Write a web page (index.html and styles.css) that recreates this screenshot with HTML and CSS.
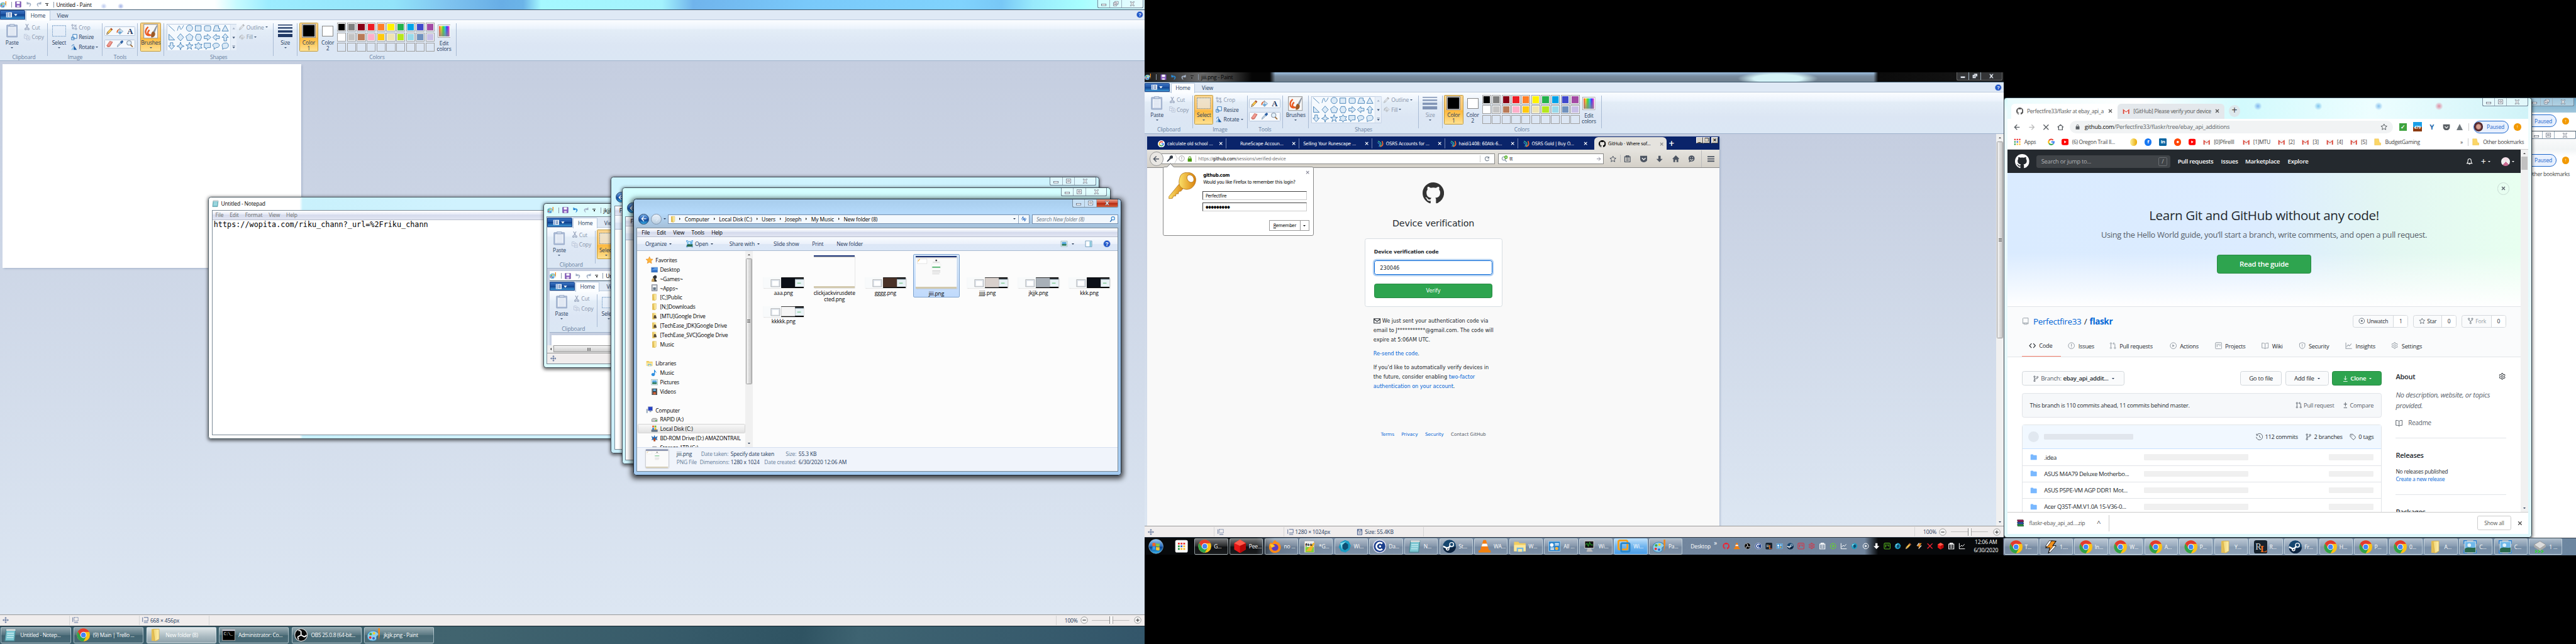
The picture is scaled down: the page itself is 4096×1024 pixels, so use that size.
FILE: index.html
```html
<!DOCTYPE html>
<html lang="en">
<head>
<meta charset="utf-8">
<title>Desktop</title>
<link rel="stylesheet" href="styles.css">
</head>
<body>
<svg class="defs-text">
<symbol id="letterA" viewBox="0 0 16 16"><text x="8" y="14" text-anchor="middle" font-family="Liberation Serif,serif" font-weight="bold" font-size="18" fill="#1d3660">A</text></symbol>
<symbol id="help" viewBox="0 0 16 16"><circle cx="8" cy="8" r="7.500" fill="#2156c8" stroke="#9cb4e4"/><text x="8" y="12.500" font-size="12" font-weight="bold" text-anchor="middle" fill="#fff" font-family="Liberation Sans,sans-serif">?</text></symbol>
<symbol id="cmd" viewBox="0 0 30 30"><path d="M1 3h28v24H1z" fill="#000" stroke="#aaa" stroke-width="1.500"/><path d="M1 3h28v3H1z" fill="#ccd"/><text x="4" y="16" font-size="9" fill="#fff" font-family="Liberation Mono,monospace">C:\_</text></symbol>
<symbol id="npp" viewBox="0 0 30 30"><path d="M3 3h22v26H3z" fill="#f8f8f8" stroke="#999"/><path d="M6 8h16M6 12h16" stroke="#aaa"/><path d="M5 16h19v12H5z" fill="#7fce3a"/><path d="M12 19l-6 7 12 0 8-18-3-1z" fill="#f2b22a"/><text x="5" y="16" font-size="11" font-weight="bold" font-family="Liberation Sans,sans-serif">f++</text></symbol>
<symbol id="rl" viewBox="0 0 30 30"><rect width="30" height="30" rx="5" fill="#16222c"/><text x="3" y="21" font-size="20" fill="#ddd" font-family="Liberation Serif,serif">R</text><text x="14" y="27" font-size="22" font-weight="bold" fill="#f4701c" font-family="Liberation Serif,serif">L</text></symbol>
</svg>
<svg class="defs" width="0" height="0">
<defs>
<linearGradient id="gOrb" x1="0" y1="0" x2="0" y2="1"><stop offset="0" stop-color="#9cc8ee"/><stop offset=".5" stop-color="#2a6fc0"/><stop offset=".55" stop-color="#0b3f8c"/><stop offset="1" stop-color="#35b4ee"/></linearGradient>
<linearGradient id="gRain" x1="0" x2="1"><stop offset="0" stop-color="#f33"/><stop offset=".2" stop-color="#fd2"/><stop offset=".4" stop-color="#3d3"/><stop offset=".6" stop-color="#2cf"/><stop offset=".75" stop-color="#33f"/><stop offset="1" stop-color="#f3c"/></linearGradient>
<linearGradient id="gGray" x1="0" y1="0" x2="0" y2="1"><stop offset="0" stop-color="#888" stop-opacity="0"/><stop offset="1" stop-color="#888" stop-opacity=".8"/></linearGradient>
<linearGradient id="gFold" x1="0" x2="1"><stop offset="0" stop-color="#f0d26c"/><stop offset="1" stop-color="#fdf0b0"/></linearGradient>
<linearGradient id="gKey" x1="0" x2="1"><stop offset="0" stop-color="#fbe06a"/><stop offset="1" stop-color="#d9820c"/></linearGradient>
</defs>
<symbol id="palette" viewBox="0 0 16 16"><path d="M7 3C3 3 0 6 0 9.500s3 5.500 6.500 5.500 5-2 4.500-4 2-2 2.500-3.500S11 3 7 3z" fill="#8fd0ee" stroke="#3c86b4" stroke-width=".8"/><circle cx="4" cy="7" r="1.500" fill="#4a4"/><circle cx="8" cy="6" r="1.500" fill="#fc2"/><circle cx="3.500" cy="11" r="1.500" fill="#e33"/><circle cx="7.500" cy="12" r="1.500" fill="#36c"/><path d="M13 0h2v5l-1 9-1-9z" fill="#f08a1c"/></symbol>
<symbol id="save" viewBox="0 0 14 14"><path d="M1 1h12v12H1z" fill="#8a5fc0" stroke="#5c3a92"/><path d="M3.500 1h7v5h-7z" fill="#fff"/><path d="M4 9h6v4H4z" fill="#e4dcf0"/></symbol>
<symbol id="undo" viewBox="0 0 14 14"><path d="M2 1v6h6L6 5c4 0 4 4 1 8 6-3 7-10-1-10z" fill="currentColor"/></symbol>
<symbol id="redo" viewBox="0 0 14 14"><path d="M12 1v6H6l2-2c-4 0-4 4-1 8C1 10 0 3 8 3z" fill="currentColor"/></symbol>
<symbol id="paste" viewBox="0 0 26 30"><rect x="1" y="2" width="24" height="27" rx="1" fill="#a9b9d4" stroke="#8c9fc0"/><path d="M4 6h18v20H4z" fill="#f2f6fc"/><path d="M8 0h10v5H8z" fill="#c9d4e6" stroke="#8c9fc0"/><path d="M6 9h14M6 12h14M6 15h14M6 18h14M6 21h14M6 24h14" stroke="#c3cfe2"/></symbol>
<symbol id="cut" viewBox="0 0 14 14"><g fill="none" stroke="#97a4bc" stroke-width="1.600"><path d="M4 0l5 9M10 0L5 9"/><circle cx="4" cy="11.500" r="1.800"/><circle cx="10" cy="11.500" r="1.800"/></g></symbol>
<symbol id="copy" viewBox="0 0 16 16"><g fill="#eef3fa" stroke="#9dadc8"><path d="M1 1h6l2 2v8H1z"/><path d="M7 5h6l2 2v8H7z"/><path d="M9 8h4M9 10h4M9 12h4M3 4h3M3 6h3"/></g></symbol>
<symbol id="select" viewBox="0 0 31 26"><rect x=".5" y="1" width="30" height="24" fill="#e6eefa" fill-opacity=".6" stroke="#1c5a9c" stroke-dasharray="2 1.500"/></symbol>
<symbol id="crop" viewBox="0 0 14 14"><path d="M3 0v11h11M0 3h11v11M3 11l9-9" fill="none" stroke="#97a4bc" stroke-width="1.400"/></symbol>
<symbol id="resize" viewBox="0 0 14 14"><path d="M4 1h9v9H4zM1 7h6v6H1z" fill="#eef6fd" stroke="#2b74b8" stroke-width="1.300"/></symbol>
<symbol id="rotate" viewBox="0 0 14 14"><path d="M6 3l7 10H6z" fill="#1a5ea8"/><path d="M5 6v7H0z" fill="#88c0ea"/><path d="M2 5c0-3 3-4 5-3" fill="none" stroke="#2b74b8" stroke-width="1.400"/></symbol>
<symbol id="pencil" viewBox="0 0 16 16"><path d="M1 15l1.500-5L11 1l3 3-8.500 9z" fill="#ffc94d" stroke="#8c6a28"/><path d="M1 15l1.500-5 3 3z" fill="#f4d9b0" stroke="#333" stroke-width=".6"/><path d="M11 1l3 3-2 2-3-3z" fill="#b04a36"/></symbol>
<symbol id="bucket" viewBox="0 0 16 16"><path d="M7 2l8 6-7 7-6-6z" fill="#d8ebf8" stroke="#5c88ae"/><path d="M8 1v8" stroke="#888"/><path d="M7 3C2 4 0 7 1 12c2 0 2-5 5-7z" fill="#e4632a"/><path d="M4 9h9l-5 5z" fill="#5c9fd4"/></symbol>
<symbol id="eraser" viewBox="0 0 16 16"><path d="M1 12L8 2l6 2-6 10-5 1z" fill="#f09a90" stroke="#c35e52"/><path d="M1 12l6 2 7-10" fill="none" stroke="#c35e52"/></symbol>
<symbol id="picker" viewBox="0 0 16 16"><path d="M2 15l1-4 6-6 2 2-6 6z" fill="#c8dcec" stroke="#6b86a0"/><path d="M8 4l5-4 3 3-4 5z" fill="#2d62a6"/></symbol>
<symbol id="mag" viewBox="0 0 16 16"><circle cx="6" cy="6" r="5" fill="#e3f1fb" stroke="#8896a8" stroke-width="1.500"/><path d="M9 10l5 5" stroke="#9a6a38" stroke-width="2.500"/></symbol>
<symbol id="find" viewBox="0 0 16 16"><circle cx="10" cy="5.500" r="4.500" fill="none" stroke="#3a8ad0" stroke-width="2"/><path d="M7 9l-5 6" stroke="#2c6cb0" stroke-width="2.500"/></symbol>
<symbol id="addfind" viewBox="0 0 16 16"><circle cx="6" cy="7" r="4" fill="none" stroke="#8896a8" stroke-width="1.600"/><path d="M9 10l4 5" stroke="#8896a8" stroke-width="2"/><circle cx="11.500" cy="4" r="4" fill="#4caf1c"/><path d="M9.500 4h4M11.500 2v4" stroke="#fff" stroke-width="1.300"/></symbol>
<symbol id="brush" viewBox="0 0 34 34"><rect x="1" y="1" width="32" height="32" fill="#f7f7f7" stroke="#8f8f8f" stroke-width="1.500"/><path d="M11 7c-9 8-8 22 7 19-9-1-10-6-4-12" fill="none" stroke="#ea5a22" stroke-width="3.500"/><path d="M31 2L22 18l4 3 6-16z" fill="#8a93a0"/><path d="M22 17l5 4c1 8-5 11-9 10-1-6 0-11 4-14z" fill="#9c5a26"/></symbol>
<symbol id="shapes" viewBox="0 0 157 60"><rect x=".5" y=".5" width="156" height="59" fill="#f5f9fd" stroke="#a8bbd4"/><path d="M143 1v58h13V1z" fill="#e6eef8"/><path d="M142.500 0v60" stroke="#c8d6e8"/><g fill="#dbeaf7" stroke="#2c70ac" stroke-width="1.100"><path d="M4 3l14 13"/><path d="M24 15c3-14 5-12 6-6s4 3 8-6" fill="none"/><circle cx="51" cy="9.500" r="7"/><path d="M64 4h13v12H64z"/><rect x="84.500" y="4" width="14" height="12" rx="3"/><path d="M108 4h8v6h3v6h-15z"/><path d="M131 3l7 13h-14z"/><path d="M5 23v13h13z"/><path d="M31 22l7 8-7 8-7-8z"/><path d="M51 22l8 6-3 9H46l-3-9z"/><path d="M67 23h8l3 7-3 7h-8l-3-7z"/><path d="M84 27h7v-4l8 7-8 7v-4h-7z"/><path d="M118 27h-7v-4l-8 7 8 7v-4h7z"/><path d="M128 38v-8h-4l7-8 7 8h-4v8z"/><path d="M8 42v7H4l7 8 7-8h-4v-7z"/><path d="M31 41l2 6 6 3-6 2-2 6-2-6-6-2 6-3z"/><path d="M51 41l2 6h6l-5 4 2 6-5-4-5 4 2-6-5-4h6z"/><path d="M71 41l2.500 4.500H79L76.500 50l2.500 4h-5.500L71 58l-2.500-4H63l2.500-4-2.500-4.500h5.500z"/><path d="M84 43h14v10h-7l-3 4-1-4h-3z"/><path d="M111 43c9 0 9 10 0 10l-5 4v-5c-5-3-3-9 5-9z"/><path d="M131 43c4-2 8 2 7 7s-8 5-10 5l-3 2v-5c-3-5 1-10 6-9z"/></g><path d="M147 12h6l-3-4z" fill="#a5b2c6"/><path d="M147 29h6l-3 4zM147 51h6l-3 4zM147 48h6v1h-6z" fill="#3f5574"/></symbol>
<symbol id="bars" viewBox="0 0 33 29"><path d="M0 0h33v2H0zM0 6h33v3H0zM0 13h33v5H0zM0 21h33v7H0z" fill="currentColor"/></symbol>
<symbol id="rainbow" viewBox="0 0 30 30"><rect x=".5" y=".5" width="29" height="29" fill="#fff" stroke="#888"/><rect x="3" y="3" width="24" height="24" fill="url(#gRain)"/><rect x="3" y="3" width="24" height="24" fill="url(#gGray)"/></symbol>
<symbol id="filebtn" viewBox="0 0 30 14"><path d="M0 1h14v12H0z" fill="#fff"/><path d="M1.500 2h3v10h-3z" fill="#7ea2d8"/><path d="M6 4h6M6 7h6M6 10h6" stroke="#234f96" stroke-width="1.400"/><path d="M19 5h8l-4 5z" fill="#fff"/></symbol>
<symbol id="wmin" viewBox="0 0 14 14"><rect x="1.500" y="7.500" width="11" height="4" fill="#fff" stroke="#4c5668"/></symbol>
<symbol id="wmax" viewBox="0 0 14 14"><rect x="1.500" y="2" width="11" height="9.500" fill="#fff" stroke="#4c5668"/><rect x="5" y="5" width="4" height="3" fill="none" stroke="#4c5668"/></symbol>
<symbol id="wres" viewBox="0 0 14 14"><path d="M5 1h8v7H5z" fill="#fff" stroke="#4c5668"/><path d="M1.500 4h8v8h-8z" fill="#fff" stroke="#4c5668"/><path d="M4 7h3v2H4z" fill="none" stroke="#4c5668"/></symbol>
<symbol id="wx" viewBox="0 0 14 14"><path d="M2 2h3l2 3 2-3h3L8.800 7l3.200 5H9L7 9l-2 3H2l3.200-5z" fill="#fff" stroke="#4c5668" stroke-width=".9"/></symbol>
<symbol id="cross" viewBox="0 0 10 10"><path d="M1.500 1.500l7 7M8.500 1.500l-7 7" stroke="currentColor" stroke-width="1.800"/></symbol>
<symbol id="move" viewBox="0 0 14 14"><path d="M7 1v12M1 7h12M5 3l2-2 2 2M5 11l2 2 2-2M3 5L1 7l2 2M11 5l2 2-2 2" fill="none" stroke="#24427a"/></symbol>
<symbol id="selsize" viewBox="0 0 14 14"><path d="M4 1h9v8H4z" fill="none" stroke="#24427a" stroke-dasharray="1.500 1"/><path d="M1 1v10M4 12.500h9" stroke="#24427a"/></symbol>
<symbol id="imgsize" viewBox="0 0 14 14"><path d="M4 1h9v8H4" fill="none" stroke="#24427a"/><path d="M1 1v10M4 12.500h9" stroke="#24427a"/></symbol>
<symbol id="disk" viewBox="0 0 14 14"><path d="M2 1h10v12H2zM4 1v4h6V1M4 9h6" fill="none" stroke="#24427a" stroke-width="1.200"/></symbol>
<symbol id="minus" viewBox="0 0 16 16"><circle cx="8" cy="8" r="7" fill="#f4f4f4" stroke="#888"/><path d="M4.500 8h7" stroke="#444" stroke-width="1.600"/></symbol>
<symbol id="plus" viewBox="0 0 16 16"><circle cx="8" cy="8" r="7" fill="#f4f4f4" stroke="#888"/><path d="M4.500 8h7M8 4.500v7" stroke="#444" stroke-width="1.600"/></symbol>
<symbol id="notepad" viewBox="0 0 16 16"><path d="M3 1.500h11l-1.500 13.500H1.500z" fill="#7cc7d2" stroke="#4d8a96"/><path d="M3 1h11v2H3z" fill="#d9d9d9"/><path d="M4 6h8M4 8.500h8M3.500 11h8" stroke="#c8ecf0"/></symbol>
<symbol id="chrome" viewBox="0 0 30 30"><circle cx="15" cy="15" r="14.500" fill="#fbc116"/><path d="M15 15L2.500 7.800A14.500 14.500 0 0 1 27.600 7.800L15 8z" fill="#e33b2e"/><path d="M15 8h12.600A14.500 14.500 0 0 0 2.500 7.800L9 18z" fill="#e33b2e"/><path d="M2.500 7.800A14.500 14.500 0 0 0 15 29.500l6-10.500-12-1z" fill="#2fa24c"/><circle cx="15" cy="15" r="6.800" fill="#fff"/><circle cx="15" cy="15" r="5.400" fill="#4285f4"/></symbol>
<symbol id="folder" viewBox="0 0 16 16"><path d="M3 1h7v14H3z" fill="#e3be55"/><path d="M5 1l7 0v12l-5 2.500z" fill="url(#gFold)" stroke="#d2ac46" stroke-width=".6"/></symbol>
<symbol id="bfold" viewBox="0 0 16 16"><path d="M1 1h9l2 9h3v5H1z" fill="#fbd667" stroke="#e6b840" stroke-width=".6"/></symbol>
<symbol id="obs" viewBox="0 0 30 30"><circle cx="15" cy="15" r="14" fill="#0a0a0a" stroke="#ddd" stroke-width="1.500"/><path d="M15 15V7a6 6 0 0 0-6-2M15 15l7 4a6 6 0 0 0 5-4M15 15l-7 4a6 6 0 0 0 2 6" stroke="#fff" stroke-width="2.500" fill="none"/></symbol>
<symbol id="orb" viewBox="0 0 34 34"><circle cx="17" cy="17" r="16" fill="url(#gOrb)" stroke="#8fb2cc"/><path d="M9 10c3-2 5-1 7 0v7c-2-1-5-1-7 0z" fill="#f0632a"/><path d="M17 10c3 1 5 2 8 0v7c-3 2-5 1-8 0z" fill="#8cc63e"/><path d="M9 18c3-2 5-1 7 0v7c-2-1-5-1-7 0z" fill="#3a9ae8"/><path d="M17 18c3 1 5 2 8 0v7c-3 2-5 1-8 0z" fill="#fdc82a"/></symbol>
<symbol id="appsq" viewBox="0 0 30 30"><rect x="1" y="1" width="28" height="28" rx="4" fill="#fafafa"/><path d="M7 7h4v4H7zM13 7h4v4h-4zM19 7h4v4h-4z" fill="#e33"/><path d="M7 13h4v4H7z" fill="#2a9c4a"/><path d="M13 13h4v4h-4z" fill="#36c"/><path d="M19 13h4v4h-4z" fill="#fb2"/><path d="M7 19h4v4H7z" fill="#2a9c4a"/><path d="M13 19h4v4h-4zM19 19h4v4h-4z" fill="#fb2"/></symbol>
<symbol id="apps9" viewBox="0 0 15 15"><path d="M1 1h3v3H1zM6 1h3v3H6zM11 1h3v3h-3z" fill="#e33"/><path d="M1 6h3v3H1zM1 11h3v3H1z" fill="#2a9c4a"/><path d="M6 6h3v3H6z" fill="#36c"/><path d="M11 6h3v3h-3zM6 11h3v3H6zM11 11h3v3h-3z" fill="#fb2"/></symbol>
<symbol id="ruby" viewBox="0 0 30 30"><path d="M15 0l13 8v14l-13 8-13-8V8z" fill="#e51616"/><path d="M15 0l13 8-13 6L2 8z" fill="#ff5a4a"/><path d="M15 14v16l13-8V8z" fill="#b40808"/></symbol>
<symbol id="firefox" viewBox="0 0 30 30"><path d="M15 1c2 4 4 4 8 6 6 6 6 14 1 19s-14 5-19 0S0 12 5 6c1 2 3 2 4 2 1-3 3-6 6-7z" fill="#ff8a16"/><circle cx="14.500" cy="17.500" r="7.500" fill="#5b3cc4"/><path d="M3 11c4-2 9 0 12 4-4 0-5 3-8 3z" fill="#ffc928"/></symbol>
<symbol id="swirl" viewBox="0 0 30 30"><path d="M15 1l8 3 5 9-3 10-9 6-10-3-5-9 4-11z" fill="#1b9bc2"/><path d="M15 6l7 5v8l-7 5-7-5v-8z" fill="#0d4f74"/><path d="M4 8l14-4-9 8v12z" fill="#7fdcee"/></symbol>
<symbol id="dcc" viewBox="0 0 30 30"><circle cx="15" cy="15" r="14" fill="#1c3f8c" stroke="#dde" stroke-width="2"/><path d="M21 9a8 8 0 1 0 0 12" fill="none" stroke="#fff" stroke-width="4"/><circle cx="16" cy="15" r="2.500" fill="#fff"/></symbol>
<symbol id="steam" viewBox="0 0 30 30"><circle cx="15" cy="15" r="14.500" fill="#15456e"/><path d="M1 19a14.500 14.500 0 0 0 28 0c1-8-4 0-14 0z" fill="#0d2440"/><circle cx="20" cy="11" r="4.500" fill="none" stroke="#fff" stroke-width="2"/><path d="M1 15l10 5M17 14l-5 5" stroke="#fff" stroke-width="3.500"/><circle cx="11" cy="20.500" r="3" fill="none" stroke="#fff" stroke-width="2"/></symbol>
<symbol id="vlc" viewBox="0 0 30 30"><path d="M12 1h6l7 24H5z" fill="#f57c10"/><path d="M10 9h10l2 6H8z" fill="#fff"/><path d="M2 24h26l1 5H1z" fill="#f0820e"/></symbol>
<symbol id="explorer" viewBox="0 0 30 30"><path d="M2 5h10l2 3h14v18H2z" fill="#f0cc60"/><path d="M2 12h26v14H2z" fill="#fbe79c"/><path d="M8 18h15v9H8z" fill="#74b8e0"/><path d="M11 21h9v6h-9z" fill="#fbe79c"/></symbol>
<symbol id="panel" viewBox="0 0 30 30"><rect x="2" y="4" width="26" height="22" fill="#2f86cc" stroke="#bfe0f4"/><circle cx="9" cy="12" r="4" fill="#fff"/><path d="M16 9h9M16 12h9M6 19h8M6 22h8" stroke="#fff" stroke-width="2"/><circle cx="20" cy="20" r="3.500" fill="#ffb23a"/></symbol>
<symbol id="sysmon" viewBox="0 0 30 30"><path d="M4 3h20v16H4z" fill="#111" stroke="#ccc" stroke-width="1.500"/><path d="M6 12l3-4 3 7 3-9 3 6h4" stroke="#3f3" fill="none"/><path d="M10 20h8l4 7H8z" fill="#bbb"/></symbol>
<symbol id="vmw" viewBox="0 0 30 30"><rect x="2" y="2" width="20" height="20" rx="3" fill="none" stroke="#f6a01c" stroke-width="4"/><rect x="8" y="8" width="19" height="19" rx="3" fill="none" stroke="#2b86c8" stroke-width="4"/></symbol>
<symbol id="winamp" viewBox="0 0 30 30"><path d="M17 1l10 1-7 10h6L10 29l3-12H4z" fill="#f2901c" stroke="#111" stroke-width="1.500"/><path d="M12 1l5 1L8 14H3zM22 12l5 1-14 15-2-3z" fill="#fff" stroke="#111"/></symbol>
<symbol id="pic" viewBox="0 0 30 30"><rect x="3" y="3" width="24" height="24" fill="#6fb8ea" stroke="#fff"/><path d="M3 19c8-6 14 0 24-3v11H3z" fill="#2a6a50"/><circle cx="13" cy="11" r="4" fill="#fff" opacity=".8"/><path d="M1 8V1h7M22 1h7v7M29 22v7h-7M8 29H1v-7" fill="none" stroke="#2d84d4" stroke-width="2"/></symbol>
<symbol id="drive" viewBox="0 0 30 30"><path d="M15 2l13 8-13 9L2 10z" fill="#ddd" stroke="#888"/><path d="M2 10l13 9v5L2 15zM28 10l-13 9v5l13-9z" fill="#aaa"/><path d="M4 22l4 3-4 3M11 22l4 3-4 3M18 22l4 3-4 3" stroke="#3d3" stroke-width="2" fill="none"/></symbol>
<symbol id="octo" viewBox="0 0 16 16"><path fill="currentColor" d="M8 0C3.580 0 0 3.580 0 8c0 3.540 2.290 6.530 5.470 7.590.4.070.550-.170.550-.380 0-.190-.010-.820-.010-1.490-2.010.370-2.530-.490-2.690-.940-.090-.230-.480-.940-.820-1.130-.280-.150-.680-.520-.010-.530.630-.010 1.080.580 1.230.820.720 1.210 1.870.870 2.330.660.070-.520.280-.870.510-1.070-1.780-.2-3.640-.890-3.640-3.950 0-.870.310-1.590.820-2.150-.080-.2-.360-1.020.080-2.120 0 0 .670-.210 2.200.820.640-.180 1.320-.270 2-.270s1.360.090 2 .270c1.530-1.040 2.200-.820 2.200-.820.440 1.100.160 1.920.080 2.120.510.560.820 1.270.820 2.150 0 3.070-1.870 3.750-3.650 3.950.290.250.540.730.540 1.480 0 1.070-.010 1.930-.010 2.200 0 .210.150.460.550.380A8.013 8.013 0 0 0 16 8c0-4.420-3.580-8-8-8z"/></symbol>
<symbol id="goog" viewBox="0 0 16 16"><g fill="none" stroke-width="3"><path d="M12.200 3.800A6 6 0 0 0 3 4.700" stroke="#ea4335"/><path d="M3 4.700a6 6 0 0 0 0 6.600" stroke="#fbbc05"/><path d="M3 11.300a6 6 0 0 0 9 1" stroke="#34a853"/><path d="M12 12.300A6 6 0 0 0 14 8H8" stroke="#4285f4"/></g></symbol>
<symbol id="googw" viewBox="0 0 16 16"><circle cx="8" cy="8" r="8" fill="#fff"/><g fill="none" stroke-width="2.500"><path d="M11.200 4.700A4.600 4.600 0 0 0 4.200 5.500" stroke="#ea4335"/><path d="M4.200 5.500a4.600 4.600 0 0 0 0 5" stroke="#fbbc05"/><path d="M4.200 10.500a4.600 4.600 0 0 0 7 .8" stroke="#34a853"/><path d="M11.200 11.300A4.600 4.600 0 0 0 12.600 8H8" stroke="#4285f4"/></g></symbol>
<symbol id="pa" viewBox="0 0 16 16"><path d="M3 2c8 3 8 8 4 12" fill="none" stroke="#3b9" stroke-width="2"/><path d="M2 5c5 2 6 6 3 9" fill="none" stroke="#38c" stroke-width="2"/><path d="M8 14c6-1 7-6 4-12" fill="none" stroke="#e63" stroke-width="2.500"/></symbol>
<symbol id="gmail" viewBox="0 0 16 16"><path d="M1 3h14v11H1z" fill="#f2f2f2"/><path d="M1 3l7 6 7-6v11h-2.500V7L8 11 3.500 7v7H1z" fill="#dc4437"/></symbol>
<symbol id="yt" viewBox="0 0 16 16"><rect y="1" width="16" height="14" rx="4" fill="#f00"/><path d="M6 5l5 3-5 3z" fill="#fff"/></symbol>
<symbol id="star" viewBox="0 0 16 16"><path d="M8 1.500l2 4.300 4.700.6-3.500 3.200.9 4.700L8 12l-4.100 2.300.9-4.700L1.300 6.400 6 5.800z" fill="none" stroke="currentColor" stroke-width="1.400"/></symbol>
<symbol id="gear" viewBox="0 0 16 16"><path d="M6.800 1h2.400l.5 2 1.500.8 2-.6 1.200 2-1.500 1.500v1.700l1.500 1.500-1.200 2-2-.6-1.500.8-.5 2H6.800l-.5-2-1.500-.8-2 .6-1.200-2 1.500-1.500V6.700L1.600 5.200l1.200-2 2 .6L6.300 3z" fill="none" stroke="currentColor" stroke-width="1.400"/><circle cx="8" cy="7.700" r="2.200" fill="none" stroke="currentColor" stroke-width="1.400"/></symbol>
<symbol id="branch" viewBox="0 0 16 16"><g fill="none" stroke="currentColor" stroke-width="1.400"><circle cx="4.500" cy="3" r="1.700"/><circle cx="4.500" cy="13" r="1.700"/><circle cx="11.500" cy="4" r="1.700"/><path d="M4.500 5v6M11.500 6c0 3-7 1-7 4"/></g></symbol>
<symbol id="pr" viewBox="0 0 16 16"><g fill="none" stroke="currentColor" stroke-width="1.400"><circle cx="3.500" cy="3" r="1.700"/><circle cx="3.500" cy="13" r="1.700"/><circle cx="12.500" cy="13" r="1.700"/><path d="M3.500 5v6M12.500 11V5c0-2-1-2-4-2M10.500 .5L8 3l2.500 2.500"/></g></symbol>
<symbol id="issue" viewBox="0 0 16 16"><circle cx="8" cy="8" r="6.800" fill="none" stroke="currentColor" stroke-width="1.400"/><path d="M8 4v5M8 10.500V12" stroke="currentColor" stroke-width="1.600"/></symbol>
<symbol id="code" viewBox="0 0 16 16"><path d="M6 3L1.500 8 6 13M10 3l4.500 5-4.500 5" fill="none" stroke="currentColor" stroke-width="1.600"/></symbol>
<symbol id="play" viewBox="0 0 16 16"><circle cx="8" cy="8" r="6.800" fill="none" stroke="currentColor" stroke-width="1.400"/><path d="M6 5l5 3-5 3z" fill="currentColor"/></symbol>
<symbol id="project" viewBox="0 0 16 16"><rect x="1" y="1" width="14" height="14" rx="1.500" fill="none" stroke="currentColor" stroke-width="1.400"/><path d="M4.700 4v7M8 4v3M11.300 4v5" stroke="currentColor" stroke-width="1.500"/></symbol>
<symbol id="pane" viewBox="0 0 16 16"><path d="M1 1.500h14v13H1z" fill="#fff" stroke="#4a80a8"/><path d="M10 2h4.500v12H10z" fill="#8cc8dc"/></symbol>
<symbol id="book" viewBox="0 0 16 16"><path d="M8 4C7 2.500 4 2 1 2v11c3 0 6 0 7 2 1-2 4-2 7-2V2c-3 0-6 .5-7 2zv11" fill="none" stroke="currentColor" stroke-width="1.400"/></symbol>
<symbol id="shield" viewBox="0 0 16 16"><path d="M8 1l6 2v5c0 4-3 6-6 7-3-1-6-3-6-7V3z" fill="none" stroke="currentColor" stroke-width="1.400"/><path d="M8 4.500v4M8 10v1.500" stroke="currentColor" stroke-width="1.500"/></symbol>
<symbol id="graph" viewBox="0 0 16 16"><path d="M1.500 1v13.500H15M3.500 10L7 6l2.500 2.500L14 3.500" fill="none" stroke="currentColor" stroke-width="1.500"/></symbol>
<symbol id="eye" viewBox="0 0 16 16"><circle cx="8" cy="8" r="6.500" fill="none" stroke="currentColor" stroke-width="1.500"/><circle cx="8" cy="8" r="2.200" fill="currentColor"/></symbol>
<symbol id="fork" viewBox="0 0 16 16"><g fill="none" stroke="currentColor" stroke-width="1.400"><circle cx="4" cy="3" r="1.700"/><circle cx="12" cy="3" r="1.700"/><circle cx="8" cy="13" r="1.700"/><path d="M4 5v1.500L8 8.500l4-2V5M8 8.500V11"/></g></symbol>
<symbol id="repo" viewBox="0 0 16 16"><path d="M5 14H3.500A1.500 1.500 0 0 1 2 12.500v-10A1.500 1.500 0 0 1 3.500 1H14v13h-3M2 12h12M6 11.500V16l2-1.500 2 1.500v-4.500" fill="none" stroke="currentColor" stroke-width="1.300"/></symbol>
<symbol id="history" viewBox="0 0 16 16"><path d="M2 4a7 7 0 1 1-1 4M1.500 1v3.500H5M8 4.500V8l3 1.500" fill="none" stroke="currentColor" stroke-width="1.400"/></symbol>
<symbol id="tag" viewBox="0 0 16 16"><path d="M1.500 2.500v5l7 7 5.500-5.500-7-7h-5z" fill="none" stroke="currentColor" stroke-width="1.400"/><circle cx="5" cy="5.500" r="1.100" fill="currentColor"/></symbol>
<symbol id="ghfold" viewBox="0 0 16 16"><path d="M0 2.500A1.500 1.500 0 0 1 1.500 1H6l1.500 2h7A1.500 1.500 0 0 1 16 4.500v9a1.500 1.500 0 0 1-1.500 1.500h-13A1.500 1.500 0 0 1 0 13.500z" fill="#79b8ff"/></symbol>
<symbol id="down" viewBox="0 0 16 16"><path d="M8 1v9M4.500 7L8 10.500 11.500 7M3 14.500h10" fill="none" stroke="currentColor" stroke-width="1.500"/></symbol>
<symbol id="diff" viewBox="0 0 16 16"><path d="M8 1v10M4 5.500h8M4 14h8" fill="none" stroke="currentColor" stroke-width="1.500"/></symbol>
<symbol id="back" viewBox="0 0 16 16"><path d="M8 2L2 8l6 6M2 8h12" fill="none" stroke="currentColor" stroke-width="2"/></symbol>
<symbol id="fwd" viewBox="0 0 16 16"><path d="M8 2l6 6-6 6M14 8H2" fill="none" stroke="currentColor" stroke-width="2"/></symbol>
<symbol id="stop" viewBox="0 0 16 16"><path d="M2 2l12 12M14 2L2 14" fill="none" stroke="currentColor" stroke-width="2"/></symbol>
<symbol id="home" viewBox="0 0 16 16"><path d="M1 8l7-6 7 6M3.500 7v7.500h9V7" fill="none" stroke="currentColor" stroke-width="2"/></symbol>
<symbol id="lock" viewBox="0 0 12 14"><path d="M1 6h10v8H1z" fill="currentColor"/><path d="M3.500 6V4a2.500 2.500 0 0 1 5 0v2" fill="none" stroke="currentColor" stroke-width="1.600"/></symbol>
<symbol id="reload" viewBox="0 0 16 16"><path d="M13 10a5.500 5.500 0 1 1-1-6" fill="none" stroke="currentColor" stroke-width="2"/><path d="M14 1v6H8z" fill="currentColor"/></symbol>
<symbol id="refresh" viewBox="0 0 16 16"><path d="M2 9l4-7v4h2v3H5v3M14 7l-4 7v-4H8V8h3V5" fill="none" stroke="currentColor" stroke-width="1.500"/></symbol>
<symbol id="pocket" viewBox="0 0 16 16"><path d="M0 1h16v7a8 7.500 0 0 1-16 0z" fill="currentColor"/><path d="M4 6l4 4 4-4" fill="none" stroke="#eee" stroke-width="2"/></symbol>
<symbol id="clip" viewBox="0 0 16 16"><path d="M2 3h12v12H2zM5 1h6v3H5z" fill="none" stroke="currentColor" stroke-width="1.800"/><path d="M5 7h6M5 9.500h6M5 12h6" stroke="currentColor" stroke-width="1.300"/></symbol>
<symbol id="dl" viewBox="0 0 16 16"><path d="M5.500 1h5v7H15l-7 7-7-7h4.500z" fill="currentColor"/></symbol>
<symbol id="homef" viewBox="0 0 16 16"><path d="M8 0l8 8h-2.500v7h-4v-5h-3v5h-4V8H0z" fill="currentColor"/></symbol>
<symbol id="chat" viewBox="0 0 16 16"><circle cx="8" cy="7" r="6.800" fill="currentColor"/><path d="M3 11l-1 5 5-3z" fill="currentColor"/><path d="M5.500 4v2M10.500 4v2M4.500 8.500c2 3 5 3 7 0" stroke="#e4e2dc" stroke-width="1.500" fill="none"/></symbol>
<symbol id="menu" viewBox="0 0 16 16"><path d="M0 3h16M0 8h16M0 13h16" stroke="currentColor" stroke-width="2.600"/></symbol>
<symbol id="chevr" viewBox="0 0 8 22"><path d="M1 0l6 11-6 11" fill="none" stroke="#b8b8b8"/></symbol>
<symbol id="key" viewBox="0 0 16 16"><path d="M14 1c3 3 1 7-3 7l-2 1-1 2-2 .5-1 2-3 2H1v-2l6-7c-1-4 3-8 7-5.500z" fill="currentColor"/></symbol>
<symbol id="bigkey" viewBox="0 0 62 60"><path d="M24 26L1 54v5l8-1 2-5 5 0 1-5 5 0 1-5 5-1 7-9z" fill="url(#gKey)" stroke="#a8660c"/><path d="M36 1c15-3 26 5 25 17S50 40 38 38 22 28 24 17 29 3 36 1z" fill="url(#gKey)" stroke="#a8660c"/><ellipse cx="49" cy="14" rx="7" ry="9" fill="#fff" stroke="#a8660c" transform="rotate(-35 49 14)"/></symbol>
<symbol id="mail" viewBox="0 0 16 12"><path d="M1 1h14v10H1zM1 2l7 5 7-5" fill="none" stroke="currentColor" stroke-width="1.600"/></symbol>
<symbol id="desk" viewBox="0 0 16 16"><path d="M1 3h14v11H1z" fill="#2d6cc4" stroke="#7a9cc8"/><path d="M1 10l9-7h5v6z" fill="#5a9ae4"/></symbol>
<symbol id="chess" viewBox="0 0 16 16"><path d="M3 15h10v-2L10 9c4-1 4-6 1-8H8L4 5l2 3-3 5z" fill="#333"/><path d="M1 15h7L7 8l-2-1-3 3z" fill="#c8a05a"/></symbol>
<symbol id="apps" viewBox="0 0 16 16"><path d="M2 1h12v14H2z" fill="#b8c0c8" stroke="#667"/><path d="M4 3h8v3H4z" fill="#fff"/><circle cx="8" cy="10" r="3" fill="#678"/></symbol>
<symbol id="starf" viewBox="0 0 16 16"><path d="M8 0l2.300 5.300 5.700.6-4.300 3.800 1.300 5.800L8 12.500l-5 3 1.300-5.800L0 5.900l5.700-.6z" fill="#ffb43a" stroke="#d97a10" stroke-width=".7"/></symbol>
<symbol id="note" viewBox="0 0 16 16"><path d="M8 1c1 3 5 4 4 8-1-3-2-3-3-3v6a4 3.500 0 1 1-2-3V1z" fill="#2f8fe0"/></symbol>
<symbol id="picture" viewBox="0 0 16 16"><path d="M1 2h14v12H1z" fill="#fff" stroke="#8aa"/><path d="M3 4h10v8H3z" fill="#5aa8dc"/><path d="M3 9c4-2 6 1 10-1v4H3z" fill="#2b7a50"/></symbol>
<symbol id="film" viewBox="0 0 16 16"><path d="M2 1h12v14H2z" fill="#333"/><path d="M5 2h6v5H5z" fill="#5aa8dc"/><path d="M5 9h6v5H5z" fill="#d4643a"/><path d="M3.300 2v12M12.700 2v12" stroke="#fff" stroke-dasharray="1.500 1.500"/></symbol>
<symbol id="rar" viewBox="0 0 16 16"><path d="M1 1h13l1 4H2z" fill="#a01c6c" stroke="#300"/><path d="M1 6h13l1 4H2z" fill="#2a5cc0" stroke="#013"/><path d="M1 11h13l1 4H2z" fill="#2a9a4a" stroke="#031"/></symbol>
<symbol id="comp" viewBox="0 0 16 16"><path d="M5 1h10v9H5z" fill="#2440c4" stroke="#aab"/><path d="M8 10h4v3H8zM1 6h3v9H1z" fill="#9ab"/></symbol>
<symbol id="hdd" viewBox="0 0 16 16"><path d="M2 8l2-2h8l2 2v5H2z" fill="#ccc" stroke="#777"/><path d="M10 10h3v2h-3z" fill="#3b3"/></symbol>
<symbol id="cdisk" viewBox="0 0 16 16"><path d="M1 10h14v5H1z" fill="#678"/><path d="M3 1h4v4H3z" fill="#e63"/><path d="M8 1h4v4H8z" fill="#7b3"/><path d="M3 6h4v4H3z" fill="#38d"/><path d="M8 6h4v4H8z" fill="#fb2"/></symbol>
<symbol id="bd" viewBox="0 0 16 16"><path d="M8 1l2 5 5-3-2 6 2 3H1l2-3-2-6 5 3z" fill="#2b6fb8"/><path d="M6 8h4v7H6z" fill="#b84a1c"/></symbol>
<symbol id="gdrive" viewBox="0 0 16 16"><path d="M3 1h7v14H3z" fill="#e3be55"/><path d="M5 1h7v12l-5 2.500z" fill="url(#gFold)"/><path d="M7 6h4l2 7H6z" fill="#554a38"/></symbol>
<symbol id="thumb" viewBox="0 0 92 24"><path d="M0 0h92v24H0z" fill="#050505"/><path d="M0 0h41v24H0z" fill="#f8fafb"/><path d="M41 1h31v21H41z" fill="currentColor"/><path d="M18 5h20v16H18z" fill="#dde3ea" stroke="#777" stroke-width=".6"/><path d="M21 8h14v11H21z" fill="#fff"/><path d="M72 3h20v18H72z" fill="#e9f2f6"/><path d="M72 3h20v2H72z" fill="#4c5a66"/><path d="M77 12h8v2h-8z" fill="#8c9"/></symbol>
<symbol id="thumbtall" viewBox="0 0 92 74"><path d="M0 0h92v74H0z" fill="#fcfcfc"/><path d="M0 0h92v3H0z" fill="#1b3274"/><path d="M0 3h92v2H0z" fill="#d6d2ca"/><path d="M0 69h92v5H0z" fill="#d2c9ae"/></symbol>
<symbol id="thumbdev" viewBox="0 0 92 74"><path d="M0 0h92v74H0z" fill="#fafafa"/><path d="M0 0h92v3H0z" fill="#1b3274"/><path d="M0 3h92v2H0z" fill="#d6d2ca"/><path d="M0 69h92v5H0z" fill="#d2c9ae"/><circle cx="46" cy="10" r="2" fill="#444"/><path d="M38 14h16M37 33h18M37 36h18M37 40h16" stroke="#bbb"/><path d="M36 18h20v9H36z" fill="#fff" stroke="#ddd" stroke-width=".5"/><path d="M37 24h18v2H37z" fill="#2ea44f"/><path d="M4 7h21v10H4z" fill="#fff" stroke="#bbb" stroke-width=".5"/><path d="M5 12l4-5" stroke="#e9a020" stroke-width="1.500"/></symbol>
</svg>

<main class="desk">
<!-- Left monitor -->
<section class="mon left">
  <div class="paint">
    <header class="p-title glass"><svg class="pal"><use href="#palette"/></svg><i class="vs"></i><svg class="sv"><use href="#save"/></svg><svg class="un dim"><use href="#undo"/></svg><svg class="un dim"><use href="#redo"/></svg><i class="qa"></i><i class="vs"></i><b>Untitled - Paint</b><span class="wbtn"><svg><use href="#wmin"/></svg><svg><use href="#wres"/></svg><svg><use href="#wx"/></svg></span></header>
    <nav class="p-tabs"><span class="fbtn"><svg><use href="#filebtn"/></svg></span><span class="tab on">Home</span><span class="tab">View</span><svg class="hlp"><use href="#help"/></svg></nav>
    <div class="ribbon">
      <div class="grp clipb"><div class="gb"><div class="big paste"><svg><use href="#paste"/></svg>Paste<i class="car"></i></div><div class="minis off"><span><svg><use href="#cut"/></svg>Cut</span><span><svg><use href="#copy"/></svg>Copy</span></div></div><em>Clipboard</em></div>
      <div class="grp image"><div class="gb"><div class="big sel"><svg><use href="#select"/></svg>Select<i class="car"></i></div><div class="minis"><span class="off"><svg><use href="#crop"/></svg>Crop</span><span><svg><use href="#resize"/></svg>Resize</span><span><svg><use href="#rotate"/></svg>Rotate<i class="car"></i></span></div></div><em>Image</em></div>
      <div class="grp tools"><div class="gb"><p><svg><use href="#pencil"/></svg><svg><use href="#bucket"/></svg><svg><use href="#letterA"/></svg></p><p><svg><use href="#eraser"/></svg><svg><use href="#picker"/></svg><svg><use href="#mag"/></svg></p></div><em>Tools</em></div>
      <div class="grp brushes"><div class="gb"><div class="big hot"><svg><use href="#brush"/></svg>Brushes<i class="car"></i></div></div></div>
      <div class="grp shapes"><div class="gb"><svg class="gal"><use href="#shapes"/></svg><div class="minis off"><span><svg><use href="#pencil"/></svg>Outline<i class="car"></i></span><span><svg><use href="#bucket"/></svg>Fill<i class="car"></i></span></div></div><em>Shapes</em></div>
      <div class="grp size"><div class="gb"><div class="big"><svg><use href="#bars"/></svg>Size<i class="car"></i></div></div></div>
      <div class="grp colors"><div class="gb"><div class="big hot c1"><u></u>Color<br>1</div><div class="big c2"><u></u>Color<br>2</div><div class="pal10"><i></i><i></i><i></i><i></i><i></i><i></i><i></i><i></i><i></i><i></i><i></i><i></i><i></i><i></i><i></i><i></i><i></i><i></i><i></i><i></i><i></i><i></i><i></i><i></i><i></i><i></i><i></i><i></i><i></i><i></i></div><div class="big edit"><svg><use href="#rainbow"/></svg>Edit<br>colors</div></div><em>Colors</em></div>
    </div>
    <div class="canvas"><div class="sheet blank"></div></div>
    <footer class="p-status"><span><svg><use href="#move"/></svg></span><span><svg><use href="#selsize"/></svg></span><span><svg><use href="#imgsize"/></svg>668 × 456px</span><div class="zoomer">100%<svg><use href="#minus"/></svg><i></i><svg><use href="#plus"/></svg></div></footer>
  </div>
  <div class="tbar teal"><span><svg><use href="#notepad"/></svg>Untitled - Notep...</span><span><svg><use href="#chrome"/></svg>(9) Main | Trello ...</span><span class="act"><svg><use href="#folder"/></svg>New folder (8)</span><span><svg><use href="#cmd"/></svg>Administrator: Co...</span><span><svg><use href="#obs"/></svg>OBS 25.0.8 (64-bit...</span><span><svg><use href="#palette"/></svg>jkjjk.png - Paint</span></div>

  <div class="win notepad">
    <header><svg><use href="#notepad"/></svg>Untitled - Notepad</header>
    <div class="cli"><nav class="mbar"><span>File</span><span>Edit</span><span>Format</span><span>View</span><span>Help</span></nav><pre>https://wopita.com/riku_chann?_url=%2Friku_chann</pre></div>
  </div>

  <div class="win mini-paint">
    <header class="p-title"><svg class="pal"><use href="#palette"/></svg><i class="vs"></i><svg class="sv"><use href="#save"/></svg><svg class="un"><use href="#undo"/></svg><svg class="un dim"><use href="#redo"/></svg><i class="qa"></i><i class="vs"></i><b>jkjjk.png - Paint</b></header>
    <div class="cli">
      <nav class="p-tabs"><span class="fbtn"><svg><use href="#filebtn"/></svg></span><span class="tab on">Home</span><span class="tab">View</span></nav>
      <div class="ribbon"><div class="grp clipb"><div class="gb"><div class="big paste"><svg><use href="#paste"/></svg>Paste<i class="car"></i></div><div class="minis off"><span><svg><use href="#cut"/></svg>Cut</span><span><svg><use href="#copy"/></svg>Copy</span></div></div><em>Clipboard</em></div><div class="grp image"><div class="gb"><div class="big sel hot"><svg><use href="#select"/></svg>Select<i class="car"></i></div></div></div></div>
      <div class="canvas"><div class="sheet inner">
        <header class="p-title glass"><svg class="pal"><use href="#palette"/></svg><i class="vs"></i><svg class="sv"><use href="#save"/></svg><svg class="un dim"><use href="#undo"/></svg><svg class="un dim"><use href="#redo"/></svg><i class="qa"></i><i class="vs"></i><b>Untitled - Paint</b></header>
        <nav class="p-tabs"><span class="fbtn"><svg><use href="#filebtn"/></svg></span><span class="tab on">Home</span><span class="tab">View</span></nav>
        <div class="ribbon"><div class="grp clipb"><div class="gb"><div class="big paste"><svg><use href="#paste"/></svg>Paste<i class="car"></i></div><div class="minis off"><span><svg><use href="#cut"/></svg>Cut</span><span><svg><use href="#copy"/></svg>Copy</span></div></div><em>Clipboard</em></div><div class="grp image"><div class="gb"><div class="big sel"><svg><use href="#select"/></svg>Select<i class="car"></i></div></div></div></div>
        <div class="canvas"><div class="sheet blank"></div></div>
      </div></div>
      <div class="hscroll"><i class="la"></i><div><b></b></div></div>
      <footer class="p-status"><span><svg><use href="#move"/></svg></span></footer>
    </div>
  </div>

  <div class="win ex ex1"><span class="wbtn"><svg><use href="#wmin"/></svg><svg><use href="#wmax"/></svg><svg><use href="#wx"/></svg></span><div class="addr"><b class="rnd"><svg><use href="#back"/></svg></b></div><div class="cli"><nav class="mbar"><span>File</span></nav><div class="tools2"></div></div></div>
  <div class="win ex ex2"><span class="wbtn"><svg><use href="#wmin"/></svg><svg><use href="#wmax"/></svg><svg><use href="#wx"/></svg></span><div class="addr"><b class="rnd"><svg><use href="#back"/></svg></b></div><div class="cli"><nav class="mbar"><span>File</span></nav><div class="tools2"></div></div></div>
  <div class="win ex ex3">
    <span class="wbtn"><svg><use href="#wmin"/></svg><svg><use href="#wmax"/></svg><svg class="red"><use href="#wx"/></svg></span>
    <div class="addr"><b class="rnd"><svg><use href="#back"/></svg></b><b class="rnd gr"><svg><use href="#fwd"/></svg></b><i class="dn"></i>
      <div class="path"><svg><use href="#folder"/></svg><i class="ra"></i>Computer<i class="ra"></i>Local Disk (C:)<i class="ra"></i>Users<i class="ra"></i>Joseph<i class="ra"></i>My Music<i class="ra"></i>New folder (8)<i class="dn end"></i><svg class="rf"><use href="#refresh"/></svg></div>
      <div class="srch">Search New folder (8)<svg><use href="#find"/></svg></div></div>
    <div class="cli">
      <nav class="mbar"><span>File</span><span>Edit</span><span>View</span><span>Tools</span><span>Help</span></nav>
      <div class="tools2"><span class="t1">Organize<i class="dn"></i></span><span class="t2"><svg><use href="#pic"/></svg>Open<i class="dn"></i></span><span class="t3">Share with<i class="dn"></i></span><span class="t4">Slide show</span><span class="t5">Print</span><span class="t6">New folder</span><div><svg><use href="#picture"/></svg><i class="dn"></i><svg><use href="#pane"/></svg><svg><use href="#help"/></svg></div></div>
      <div class="exbody">
        <ul class="tree"><li class="top"><svg><use href="#starf"/></svg>Favorites</li><li><svg><use href="#desk"/></svg>Desktop</li><li><svg><use href="#chess"/></svg>~Games~</li><li><svg><use href="#apps"/></svg>~Apps~</li><li><svg><use href="#folder"/></svg>[C;]Public</li><li><svg><use href="#folder"/></svg>[N;]Downloads</li><li><svg><use href="#gdrive"/></svg>[MTU]Google Drive</li><li><svg><use href="#gdrive"/></svg>[TechEase_JDK]Google Drive</li><li><svg><use href="#gdrive"/></svg>[TechEase_SVC]Google Drive</li><li><svg><use href="#folder"/></svg>Music</li><li class="sp"></li><li class="top"><svg><use href="#explorer"/></svg>Libraries</li><li><svg><use href="#note"/></svg>Music</li><li><svg><use href="#picture"/></svg>Pictures</li><li><svg><use href="#film"/></svg>Videos</li><li class="sp"></li><li class="top"><svg><use href="#comp"/></svg>Computer</li><li><svg><use href="#hdd"/></svg>RAPID (A:)</li><li class="cur"><svg><use href="#cdisk"/></svg>Local Disk (C:)</li><li><svg><use href="#bd"/></svg>BD-ROM Drive (D:) AMAZONTRAIL</li><li><svg><use href="#hdd"/></svg>Storage 1TB (G:)</li></ul>
        <div class="vscroll"><i class="ua"></i><div><b></b></div><i class="dn"></i></div>
        <div class="files">
          <figure class="fa"><svg><use href="#thumb"/></svg>aaa.png</figure><figure><svg class="tall"><use href="#thumbtall"/></svg>clickjackvirusdete<br>cted.png</figure><figure class="fb"><svg><use href="#thumb"/></svg>gggg.png</figure><figure class="pick"><svg class="tall"><use href="#thumbdev"/></svg>jiii.png</figure><figure class="fc"><svg><use href="#thumb"/></svg>jjjjj.png</figure><figure class="fd"><svg><use href="#thumb"/></svg>jkjjk.png</figure><figure class="fa"><svg><use href="#thumb"/></svg>kkk.png</figure><figure class="fe"><svg><use href="#thumb"/></svg>kkkkk.png</figure>
        </div>
      </div>
      <div class="details"><svg><use href="#thumbdev"/></svg><p><b>jiii.png</b>PNG File</p><dl><dt>Date taken:</dt><dd>Specify date taken</dd><dt>Dimensions:</dt><dd>1280 x 1024</dd></dl><dl class="d2"><dt>Size:</dt><dd>55.3 KB</dd><dt>Date created:</dt><dd>6/30/2020 12:06 AM</dd></dl></div>
    </div>
  </div>
</section>

<!-- Middle monitor -->
<section class="mon mid">
  <div class="paint">
    <header class="p-title dark"><svg class="pal"><use href="#palette"/></svg><i class="vs"></i><svg class="sv"><use href="#save"/></svg><svg class="un"><use href="#undo"/></svg><svg class="un dim"><use href="#redo"/></svg><i class="qa"></i><i class="vs"></i><b>jiii.png - Paint</b><span class="wbtn"><svg><use href="#wmin"/></svg><svg><use href="#wres"/></svg><svg><use href="#wx"/></svg></span></header>
    <nav class="p-tabs"><span class="fbtn"><svg><use href="#filebtn"/></svg></span><span class="tab on">Home</span><span class="tab">View</span><svg class="hlp"><use href="#help"/></svg></nav>
    <div class="ribbon">
      <div class="grp clipb"><div class="gb"><div class="big paste"><svg><use href="#paste"/></svg>Paste<i class="car"></i></div><div class="minis off"><span><svg><use href="#cut"/></svg>Cut</span><span><svg><use href="#copy"/></svg>Copy</span></div></div><em>Clipboard</em></div>
      <div class="grp image"><div class="gb"><div class="big sel hot"><svg><use href="#select"/></svg>Select<i class="car"></i></div><div class="minis"><span class="off"><svg><use href="#crop"/></svg>Crop</span><span><svg><use href="#resize"/></svg>Resize</span><span><svg><use href="#rotate"/></svg>Rotate<i class="car"></i></span></div></div><em>Image</em></div>
      <div class="grp tools"><div class="gb"><p><svg><use href="#pencil"/></svg><svg><use href="#bucket"/></svg><svg><use href="#letterA"/></svg></p><p><svg><use href="#eraser"/></svg><svg><use href="#picker"/></svg><svg><use href="#mag"/></svg></p></div><em>Tools</em></div>
      <div class="grp brushes"><div class="gb"><div class="big"><svg><use href="#brush"/></svg>Brushes<i class="car"></i></div></div></div>
      <div class="grp shapes"><div class="gb"><svg class="gal"><use href="#shapes"/></svg><div class="minis off"><span><svg><use href="#pencil"/></svg>Outline<i class="car"></i></span><span><svg><use href="#bucket"/></svg>Fill<i class="car"></i></span></div></div><em>Shapes</em></div>
      <div class="grp size off"><div class="gb"><div class="big"><svg><use href="#bars"/></svg>Size<i class="car"></i></div></div></div>
      <div class="grp colors"><div class="gb"><div class="big hot c1"><u></u>Color<br>1</div><div class="big c2"><u></u>Color<br>2</div><div class="pal10"><i></i><i></i><i></i><i></i><i></i><i></i><i></i><i></i><i></i><i></i><i></i><i></i><i></i><i></i><i></i><i></i><i></i><i></i><i></i><i></i><i></i><i></i><i></i><i></i><i></i><i></i><i></i><i></i><i></i><i></i></div><div class="big edit"><svg><use href="#rainbow"/></svg>Edit<br>colors</div></div><em>Colors</em></div>
    </div>
    <div class="canvas">
      <div class="sheet fx">
        <div class="fxtabs"><span><svg><use href="#googw"/></svg><b>calculate old school ...</b><svg class="x"><use href="#cross"/></svg></span><span><svg></svg><b>RuneScape Accoun...</b><svg class="x"><use href="#cross"/></svg></span><span class="noic"><b>Selling Your Runescape ...</b><svg class="x"><use href="#cross"/></svg></span><span><svg><use href="#pa"/></svg><b>OSRS Accounts for ...</b><svg class="x"><use href="#cross"/></svg></span><span><svg><use href="#pa"/></svg><b>haidi1408: 60Atk-6...</b><svg class="x"><use href="#cross"/></svg></span><span class="last"><svg><use href="#pa"/></svg><b>OSRS Gold | Buy O...</b><svg class="x"><use href="#cross"/></svg></span><span class="cur"><svg><use href="#octo"/></svg><b>GitHub · Where sof...</b><svg class="x"><use href="#cross"/></svg></span><strong>+</strong><div class="w2k"><i>_</i><i>❐</i><i>×</i></div></div>
        <div class="fxbar"><b class="bk"><svg><use href="#back"/></svg></b><div class="furl"><svg class="ky"><use href="#key"/></svg><svg class="cv"><use href="#chevr"/></svg><svg class="inf"><use href="#issue"/></svg><svg class="lk"><use href="#lock"/></svg><i></i><span>https://<b>github.com</b>/sessions/verified-device</span><i class="r"></i><svg class="rl"><use href="#reload"/></svg></div><div class="fsr"><svg><use href="#addfind"/></svg>tt<svg class="go"><use href="#fwd"/></svg></div><svg class="s1"><use href="#star"/></svg><i class="sp"></i><svg class="s2"><use href="#clip"/></svg><svg><use href="#pocket"/></svg><svg><use href="#dl"/></svg><svg><use href="#homef"/></svg><svg><use href="#chat"/></svg><i class="sp l"></i><svg class="s3"><use href="#menu"/></svg></div>
        <div class="fxpage">
          <svg class="logo"><use href="#octo"/></svg>
          <h1>Device verification</h1>
          <form class="card"><label>Device verification code</label><div class="inp">230046</div><div class="green">Verify</div></form>
          <div class="para"><p><svg><use href="#mail"/></svg> We just sent your authentication code via<br>email to J***********@gmail.com. The code will<br>expire at 5:06AM UTC.</p><p><a>Re-send the code</a>.</p><p>If you'd like to automatically verify devices in<br>the future, consider enabling <a>two-factor<br>authentication on your account</a>.</p></div>
          <div class="foot"><a>Terms</a><a>Privacy</a><a>Security</a><span>Contact GitHub</span></div>
        </div>
        <div class="pop"><svg class="kk"><use href="#bigkey"/></svg><svg class="px"><use href="#cross"/></svg><div><b>github.com</b><p>Would you like Firefox to remember this login?</p><span class="fld">Perfectfire</span><span class="fld dots">●●●●●●●●●</span><div class="rem"><span><u>R</u>emember</span><i class="dn"></i></div></div></div>
      </div>
      <div class="vscroll pv"><i class="ua"></i><div><b></b></div><i class="dn"></i></div>
    </div>
    <footer class="p-status"><span><svg><use href="#move"/></svg></span><span><svg><use href="#selsize"/></svg></span><span><svg><use href="#imgsize"/></svg>1280 × 1024px</span><span><svg><use href="#disk"/></svg>Size: 55.4KB</span><div class="zoomer">100%<svg><use href="#minus"/></svg><i></i><svg><use href="#plus"/></svg></div></footer>
  </div>
  <div class="tbar slate"><svg class="orb"><use href="#orb"/></svg><svg class="asq"><use href="#appsq"/></svg><span><svg><use href="#chrome"/></svg>G...</span><span><svg><use href="#ruby"/></svg>Pee...</span><span><svg><use href="#firefox"/></svg>no ...</span><span><svg><use href="#npp"/></svg>*G...</span><span><svg><use href="#swirl"/></svg>Wi...</span><span><svg><use href="#dcc"/></svg>Da...</span><span><svg><use href="#notepad"/></svg>N...</span><span><svg><use href="#steam"/></svg>St...</span><span><svg><use href="#vlc"/></svg>WA...</span><span><svg><use href="#explorer"/></svg>W...</span><span><svg><use href="#panel"/></svg>All ...</span><span><svg><use href="#sysmon"/></svg>Wi...</span><span class="blue"><svg><use href="#vmw"/></svg>Wi...</span><span><svg><use href="#palette"/></svg>Pa...</span><b class="dt">Desktop</b><b class="chev">»</b>
    <div class="tray"><svg class="tr"><use href="#octo"/></svg><svg><use href="#vlc"/></svg><svg><use href="#obs"/></svg><svg><use href="#dcc"/></svg><svg><use href="#rl"/></svg><svg><use href="#panel"/></svg><svg><use href="#steam"/></svg><svg class="tr"><use href="#project"/></svg><svg class="tr"><use href="#gear"/></svg><svg class="tw"><use href="#clip"/></svg><svg class="tg"><use href="#eye"/></svg><svg class="tw"><use href="#graph"/></svg><svg><use href="#swirl"/></svg><svg class="tw"><use href="#eye"/></svg><svg class="tw"><use href="#dl"/></svg><svg class="tg"><use href="#project"/></svg><svg><use href="#swirl"/></svg><svg class="tw"><use href="#pencil"/></svg><svg><use href="#winamp"/></svg><svg class="tr"><use href="#stop"/></svg><svg><use href="#ruby"/></svg><svg class="tw"><use href="#clip"/></svg><svg class="tw"><use href="#graph"/></svg></div>
    <div class="clock">12:06 AM<br>6/30/2020</div><i class="peek"></i></div>
</section>

<!-- Right monitor -->
<section class="mon right">
  <div class="behind b1"><span class="wbtn"><svg><use href="#wmin"/></svg><svg><use href="#wres"/></svg><svg><use href="#wx"/></svg></span><div class="brow"><span class="pill">Paused</span><b class="up">↑</b></div></div>
  <div class="behind b2"><span class="wbtn"><svg><use href="#wmin"/></svg><svg><use href="#wmax"/></svg><svg><use href="#wx"/></svg></span><div class="brow"><span class="pill">Paused</span><b class="up">↑</b></div><div class="ob">Other bookmarks</div></div>
  <div class="win chr">
    <span class="wbtn"><svg><use href="#wmin"/></svg><svg><use href="#wmax"/></svg><svg><use href="#wx"/></svg></span>
    <div class="ctabs"><span class="on"><svg><use href="#octo"/></svg><b>Perfectfire33/flaskr at ebay_api_a</b><svg class="x"><use href="#cross"/></svg></span><span><svg><use href="#gmail"/></svg><b>[GitHub] Please verify your device</b><svg class="x"><use href="#cross"/></svg></span><strong>+</strong></div>
    <div class="cli">
      <div class="cbar"><svg><use href="#back"/></svg><svg class="lt"><use href="#fwd"/></svg><svg><use href="#stop"/></svg><svg><use href="#home"/></svg><div class="curl"><svg class="lk"><use href="#lock"/></svg><b>github.com</b>/Perfectfire33/flaskr/tree/ebay_api_additions<svg class="st"><use href="#star"/></svg></div><i class="e e1">✓</i><i class="e e2">479</i><i class="e e3">Y</i><svg class="e4"><use href="#pocket"/></svg><i class="e e5"></i><i class="sp"></i><span class="pill"><i></i>Paused</span><b class="up">↑</b></div>
      <div class="cbk"><svg class="m0"><use href="#apps9"/></svg><span class="k1">Apps</span><svg><use href="#goog"/></svg><svg class="m1"><use href="#yt"/></svg><span class="k2">(6) Oregon Trail II...</span><i class="d yel"></i><i class="d fb">f</i><i class="d li">in</i><i class="d rd">●</i><svg class="m2"><use href="#yt"/></svg><svg><use href="#gmail"/></svg><span class="k3">[0]PfireIII</span><svg><use href="#gmail"/></svg><span class="k4">[1]MTU</span><svg><use href="#gmail"/></svg><span class="k5">[2]</span><svg><use href="#gmail"/></svg><span class="k5">[3]</span><svg><use href="#gmail"/></svg><span class="k5">[4]</span><svg><use href="#gmail"/></svg><span class="k5">[5]</span><svg><use href="#bfold"/></svg><span class="k6">BudgetGaming</span><span class="k7">»</span><i class="sp"></i><svg><use href="#bfold"/></svg><span class="k8">Other bookmarks</span></div>
      <div class="page">
        <div class="gh">
          <header class="ghh"><svg class="logo"><use href="#octo"/></svg><div class="gs">Search or jump to...<i>/</i></div><b class="n1">Pull requests</b><b class="n2">Issues</b><b class="n3">Marketplace</b><b class="n4">Explore</b><svg class="bell" viewBox="0 0 16 16"><path d="M3 12c1-1 1.500-3 1.500-6a3.500 3.500 0 0 1 7 0c0 3 .5 5 2 6.500H2.500zM6.500 14.500h3" fill="none" stroke="#fff" stroke-width="1.500"/></svg><span>+<i class="dn"></i></span><u></u><i class="dn"></i></header>
          <div class="hero"><span class="hx"><svg><use href="#cross"/></svg></span><h2>Learn Git and GitHub without any code!</h2><p>Using the Hello World guide, you’ll start a branch, write comments, and open a pull request.</p><div class="green">Read the guide</div></div>
          <div class="rh"><div class="rt"><svg><use href="#repo"/></svg><a>Perfectfire33</a><span>/</span><a><b>flaskr</b></a><div class="rb"><span class="r1"><b><svg><use href="#eye"/></svg>Unwatch</b><i>1</i></span><span class="r2"><b><svg><use href="#star"/></svg>Star</b><i>0</i></span><span class="r3"><b><svg><use href="#fork"/></svg>Fork</b><i>0</i></span></div></div>
            <nav class="rn"><span class="on"><svg><use href="#code"/></svg>Code</span><span class="q2"><svg><use href="#issue"/></svg>Issues</span><span class="q3"><svg><use href="#pr"/></svg>Pull requests</span><span class="q4"><svg><use href="#play"/></svg>Actions</span><span class="q5"><svg><use href="#project"/></svg>Projects</span><span class="q6"><svg><use href="#book"/></svg>Wiki</span><span class="q7"><svg><use href="#shield"/></svg>Security</span><span class="q8"><svg><use href="#graph"/></svg>Insights</span><span><svg><use href="#gear"/></svg>Settings</span></nav></div>
          <div class="cols">
            <div class="mainc">
              <div class="acts"><span class="btn br"><svg><use href="#branch"/></svg>Branch: <b>ebay_api_addit...</b><i class="dn"></i></span><span class="btn gf">Go to file</span><span class="btn af">Add file<i class="dn"></i></span><span class="btn cl"><svg><use href="#down"/></svg>Clone<i class="dn"></i></span></div>
              <div class="note">This branch is 110 commits ahead, 11 commits behind master.<span><svg><use href="#pr"/></svg>Pull request</span><span><svg><use href="#diff"/></svg>Compare</span></div>
              <div class="tbl"><div class="th"><u></u><s></s><span><svg><use href="#history"/></svg>112 commits</span><span><svg><use href="#branch"/></svg>2 branches</span><span><svg><use href="#tag"/></svg>0 tags</span></div>
                <div class="tr2"><svg><use href="#ghfold"/></svg><b>.idea</b><s></s><s class="sm"></s></div><div class="tr2"><svg><use href="#ghfold"/></svg><b>ASUS M4A79 Deluxe Motherbo...</b><s></s><s class="sm"></s></div><div class="tr2"><svg><use href="#ghfold"/></svg><b>ASUS P5PE-VM AGP DDR1 Mot...</b><s></s><s class="sm"></s></div><div class="tr2"><svg><use href="#ghfold"/></svg><b>Acer Q35T-AM.V1.0A 15-V36-0...</b><s></s><s class="sm"></s></div></div>
            </div>
            <aside><h3>About<svg><use href="#gear"/></svg></h3><p class="desc">No description, website, or topics<br>provided.</p><p class="rdm"><svg><use href="#book"/></svg>Readme</p><hr><h3>Releases</h3><p class="rel">No releases published<br><a>Create a new release</a></p><hr class="h2"><h3>Packages</h3></aside>
          </div>
        </div>
        <div class="cscroll"><i class="ua"></i><div></div><i class="dn"></i></div>
      </div>
      <div class="dlbar"><svg><use href="#rar"/></svg><span>flaskr-ebay_api_ad....zip</span><em>^</em><i></i><div>Show all</div><svg class="x"><use href="#cross"/></svg></div>
    </div>
  </div>
  <div class="tbar slate3"><span><svg><use href="#chrome"/></svg>T...</span><span><svg><use href="#winamp"/></svg>1....</span><span><svg><use href="#chrome"/></svg>In...</span><span><svg><use href="#chrome"/></svg>W...</span><span><svg><use href="#chrome"/></svg>A...</span><span><svg><use href="#chrome"/></svg>P...</span><span><svg><use href="#folder"/></svg>Y...</span><span><svg><use href="#rl"/></svg>R...</span><span><svg><use href="#steam"/></svg>Fr...</span><span><svg><use href="#chrome"/></svg>H...</span><span><svg><use href="#chrome"/></svg>P...</span><span><svg><use href="#chrome"/></svg>0...</span><span><svg><use href="#folder"/></svg>A...</span><span><svg><use href="#pic"/></svg>C...</span><span><svg><use href="#pic"/></svg>C...</span><span><svg><use href="#drive"/></svg>1 ...</span></div>
</section>
</main>
</body>
</html>
```
FILE: styles.css
```css
* { box-sizing: border-box; }
html, body { margin: 0; background: #000; overflow: hidden; }
body { font-family: "Open Sans", "Noto Sans", sans-serif; font-size: 12px; letter-spacing: -.25px; color: #000; }
h1, h2, h3, p, ul, pre, figure, dl, dd, hr { margin: 0; padding: 0; }
i, em { font-style: normal; }
u, s { text-decoration: none; }
svg { display: block; flex: none; }
.defs { position: absolute; }
.defs-text { display: none; }
.desk { zoom: .711111; width: 5760px; height: 1440px; display: flex; overflow: hidden; background: #000; white-space: nowrap; }
.mon { position: relative; height: 1440px; overflow: hidden; flex: none; display: flex; flex-direction: column; }
.left { width: 2560px; }
.mid { width: 1920px; padding-top: 162px; }
.right { width: 1280px; }

/* small arrows */
.car, .dn, .ua, .ra, .la { display: inline-block; flex: none; width: 0; height: 0; border: 4px solid transparent; border-top-color: #3f5574; border-bottom-width: 0; }
.car { border-width: 3px 3px 0; }
.dn { border-top-color: #1e3250; }
.ua { border-width: 0 4px 4px; border-bottom-color: #444; }
.ra { border-width: 4px 0 4px 4px; border-top-color: transparent; border-left-color: #222; }
.la { border-width: 4px 4px 4px 0; border-top-color: transparent; border-right-color: #222; }

/* Paint */
.paint { display: flex; flex-direction: column; height: 1399px; flex: none; background: #dfe9f5; }
.mid .paint { height: 1039px; }
.p-title { height: 22px; flex: none; display: flex; align-items: center; border-bottom: 1px solid #3d5a70; }
.p-title b { font-weight: 400; font-size: 12px; margin-left: 6px; }
.p-title .pal { width: 15px; height: 15px; }
.p-title .vs { width: 1px; height: 13px; background: #8a98a8; margin-left: 10px; }
.p-title .sv { width: 14px; height: 14px; margin-left: 8px; }
.p-title .un { width: 14px; height: 14px; margin-left: 9px; color: #2a8ad4; }
.p-title .dim { color: #a3b1c6; }
.p-title .qa { width: 7px; height: 6px; margin-left: 8px; border-top: 1px solid #222; background: linear-gradient(#222, #222) center bottom / 3px 3px no-repeat; }
.glass { background: radial-gradient(circle at 232px 14px, #b9c8ef 0, rgba(185,200,239,0) 7px), radial-gradient(circle at 270px 14px, #9fb0e6 0, rgba(159,176,230,0) 7px), linear-gradient(90deg, #fff 0, #fdffff 480px, #c6fbff 530px, #9cecff 600px, #93e4fa 880px, #7fc4f0 1000px, #68aee6 1120px, #6bb4e8 1170px, #a5f8ff 1210px, #a3f2fd 1480px, #70b4ec 1550px, #79c9fa 1800px, #80d3fd 2150px, #78c8f6 2240px, #98eafc 2310px, #a8ffff 2420px, #dffaff 2560px); }
.dark { background: linear-gradient(90deg, #1a1a1a 0, #3b3b3b 60px, #6a6a6a 130px, #333 200px, #050505 240px, #050505 280px, rgba(0,0,0,0) 292px, rgba(0,0,0,0) 1630px, #0b0b0b 1640px, #161616), radial-gradient(ellipse 90px 16px at 1416px 14px, #d4f2f6 60%, rgba(200,235,240,0)), linear-gradient(#9cbfe0, #7a8da0 40%, #6d7d8c); }
.dark b { color: #000; }
.wbtn { margin-left: auto; display: flex; align-self: flex-start; width: 103px; height: 18px; border: 1px solid #75899b; border-top: 0; border-radius: 0 0 4px 4px; margin-right: 3px; background: rgba(255,255,255,.35); overflow: hidden; flex: none; }
.wbtn svg { height: 17px; width: 27px; padding: 2px 0; border-right: 1px solid #9fb2c0; }
.wbtn svg:last-child { flex: 1; border: 0; }
.wbtn .red { background: linear-gradient(#e6a390, #d0543c 45%, #b3260f 50%, #d4603c); }
.dark .wbtn { background: #333436; border-color: #666; margin-right: 2px; }
.p-tabs { height: 23px; flex: none; display: flex; background: #dfe9f5; border-bottom: 1px solid #bccbdd; color: #1e395b; padding-top: 1px; position: relative; }
.fbtn { width: 56px; display: flex; align-items: center; justify-content: center; background: linear-gradient(#3a72bf, #1f55a5 45%, #0e3f8c 50%, #3d97d6); border: 1px solid #1c4488; border-radius: 0 2px 0 0; }
.fbtn svg { width: 30px; height: 13px; }
.tab { padding: 2px 12px 0; margin-left: 2px; height: 22px; border: 1px solid transparent; font-size: 12px; }
.tab.on { background: #fbfdff; border-color: #b4c6dc; border-bottom: 0; border-radius: 2px 2px 0 0; height: 23px; width: 54px; text-align: center; padding: 2px 0 0; }
.hlp { width: 15px; height: 15px; margin: 3px 4px 0 auto; }
.ribbon { height: 92px; flex: none; display: flex; background: linear-gradient(#fbfdff, #ecf3fc 18px, #e3edf7 22px, #dce6f4 55px, #dbe7f4); border-bottom: 1px solid #9fb2cb; color: #1e395b; overflow: hidden; }
.grp { flex: none; position: relative; padding-top: 5px; display: flex; flex-direction: column; }
.grp::after { content: ""; position: absolute; right: 0; top: 7px; width: 1px; height: 73px; background: #a9bbd4; }
.grp em { text-align: center; color: #68809f; line-height: 14px; display: block; }
.gb { display: flex; height: 71px; }
.clipb { width: 107px; } .image { width: 122px; } .tools { width: 79px; } .brushes { width: 58px; } .shapes { width: 246px; } .size { width: 53px; } .colors { width: 356px; }
.big { height: 66px; text-align: center; line-height: 13px; display: block; border: 1px solid transparent; border-radius: 2px; padding-top: 2px; flex: none; }
.big svg { margin: 0 auto 4px; width: 31px; height: 31px; }
.big .car { display: block; margin: 4px auto 0; }
.paste { width: 54px; } .paste svg { width: 26px; }
.sel { width: 42px; margin-left: 4px; }
.sel svg { height: 26px; margin: 3px auto 6px; }
.brushes .big { width: 46px; margin-left: 6px; } .brushes svg { width: 33px; height: 33px; margin-bottom: 2px; }
.hot { background: linear-gradient(#fbd590, #fdc466 50%, #fdb93e 54%, #fee191); border-color: #c29b3c; }
.minis { display: flex; flex-direction: column; }
.minis span { height: 22px; display: flex; align-items: center; gap: 3px; }
.minis svg { width: 14px; height: 14px; }
.image .minis { margin-left: 6px; }
.off { color: #8794aa; }
.shapes .minis svg { opacity: .45; filter: grayscale(1); }
.tools .gb { flex-direction: column; padding: 9px 0 0 4px; gap: 8px; }
.tools p { display: flex; width: 70px; height: 21px; border: 1px solid #b7c7dc; background: #f6f9fd; align-items: center; justify-content: space-around; border-radius: 2px; }
.tools p svg { width: 16px; height: 16px; }
.shapes .gb { padding: 3px 0 0 6px; gap: 5px; }
.gal { width: 157px; height: 60px; }
.shapes .minis { margin-top: -3px; }
.size .big { width: 52px; } .size .big svg { width: 33px; height: 29px; margin: 1px auto 5px; color: #1f3864; }
.size.off .big svg { color: #7f92b4; }
.colors .gb { padding-left: 4px; }
.c1 { width: 43px; } .c1 u { display: block; margin: 0 auto 4px; width: 31px; height: 31px; background: #000; border: 1px solid #888; box-shadow: inset 0 0 0 1px #fff; }
.c2 { width: 42px; } .c2 u { display: block; margin: 4px auto 7px; width: 25px; height: 24px; background: #fff; border: 1px solid #888; }
.pal10 { display: grid; grid-template-columns: repeat(10, 20px); grid-auto-rows: 20px; gap: 2px; height: 64px; margin-top: 1px; width: 219px; }
.pal10 i { border: 1px solid #a0a0a0; padding: 1px; background: #000 content-box; }
.pal10 i::before { content: ""; display: block; width: 100%; height: 100%; }
.pal10 i:nth-child(-n+20) { box-shadow: inset 0 0 0 1px #fff; }
.pal10 i:nth-child(2) { background-color: #7f7f7f; } .pal10 i:nth-child(3) { background-color: #880015; } .pal10 i:nth-child(4) { background-color: #ed1c24; } .pal10 i:nth-child(5) { background-color: #ff7f27; }
.pal10 i:nth-child(6) { background-color: #fff200; } .pal10 i:nth-child(7) { background-color: #22b14c; } .pal10 i:nth-child(8) { background-color: #00a2e8; } .pal10 i:nth-child(9) { background-color: #3f48cc; } .pal10 i:nth-child(10) { background-color: #a349a4; }
.pal10 i:nth-child(11) { background-color: #fff; } .pal10 i:nth-child(12) { background-color: #c3c3c3; } .pal10 i:nth-child(13) { background-color: #b97a57; } .pal10 i:nth-child(14) { background-color: #ffaec9; } .pal10 i:nth-child(15) { background-color: #ffc90e; }
.pal10 i:nth-child(16) { background-color: #efe4b0; } .pal10 i:nth-child(17) { background-color: #b5e61d; } .pal10 i:nth-child(18) { background-color: #99d9ea; } .pal10 i:nth-child(19) { background-color: #7092be; } .pal10 i:nth-child(20) { background-color: #c8bfe7; }
.pal10 i:nth-child(n+21) { background: none; }
.edit { width: 40px; } .edit svg { width: 29px; height: 30px; margin-bottom: 5px; margin-top: 1px; }
.canvas { flex: 1; min-height: 0; overflow: hidden; background: linear-gradient(#c5cee0, #dce6f2); padding: 6px 0 0 5px; display: flex; }
.sheet { background: #fff; box-shadow: 3px 3px 4px rgba(110,130,165,.45); flex: none; }
.blank { width: 668px; height: 456px; }
.p-status { height: 25px; flex: none; background: #f0eded; border-top: 1px solid #999; display: flex; align-items: center; color: #1e395b; }
.p-status span { width: 156px; border-right: 1px solid #d4d4d4; height: 21px; display: flex; align-items: center; padding-left: 6px; gap: 4px; }
.p-status svg { width: 14px; height: 14px; }
.zoomer { margin-left: auto; display: flex; align-items: center; border-left: 1px solid #d4d4d4; padding-left: 18px; height: 21px; width: 199px; }
.zoomer svg { width: 17px; height: 17px; margin-left: 6px; }
.zoomer i { width: 84px; height: 17px; margin-left: 9px; background: linear-gradient(90deg, #888 0 1px, #f8f8f8 1px 7px, #888 7px 8px) 39px 0 / 8px 17px no-repeat, linear-gradient(#aaa, #aaa) 0 8px / 84px 1px no-repeat; }
.zoomer i + svg { margin-left: 10px; }

/* taskbars */
.tbar { height: 41px; flex: none; display: flex; align-items: stretch; color: #fff; border-top: 2px solid #14242e; padding: 1px 0 1px 2px; }
.tbar span { flex: none; border: 1px solid rgba(220,235,240,.6); border-radius: 3px; display: flex; align-items: center; overflow: hidden; background: linear-gradient(rgba(255,255,255,.45), rgba(255,255,255,.12) 50%, rgba(255,255,255,.04) 52%, rgba(255,255,255,.08)); }
.tbar span svg { width: 30px; height: 30px; margin-right: 7px; }
.teal { background: linear-gradient(100deg, #3a5d6c, #41646f 40%, #365a69 60%, #2f5362 70%, #3e6371 75%, #33566a); gap: 6px; }
.teal span { width: 156.500px; padding-left: 5px; letter-spacing: -.45px; }
.teal .act { background: linear-gradient(#dfe6e8, #a9b9c0 60%, #8fa3ac); }
.slate { height: 40px; background: linear-gradient(90deg, #07090b 0 250px, #5c6f86 290px, #73879f 400px, #71859d 1610px, #07090b 1640px); padding-left: 8px; border-color: #2a3440; align-items: stretch; }
.orb { width: 34px; height: 36px; } .asq { width: 30px; height: 30px; margin: 3px 14px 0 25px; }
.slate span, .slate3 span { width: 75px; margin-right: 3.200px; padding-left: 7px; }
.slate span svg, .slate3 span svg { margin-right: 5px; }
.slate .blue { background: linear-gradient(#bfe0fa, #6fb4ee 50%, #4b9de6); }
.dt { font-weight: 400; align-self: center; margin-left: 15px; width: 50px; } .chev { font-weight: 400; font-size: 14px; margin-left: 2px; width: 17px; }
.tray { display: flex; align-items: center; margin-left: 2px; gap: 8px; width: 552px; } .tray svg { width: 16px; height: 15px; }
.tr { color: #e23; } .tw { color: #fff; } .tg { color: #6d2; }
.clock { text-align: center; line-height: 18px; width: 76px; padding-top: 0; }
.peek { border-left: 1px solid #556; flex: 1; }
.right .tbar { position: absolute; left: 0; right: 0; top: 1202px; height: 40px; }
.slate3 { background: linear-gradient(90deg, #6d819a, #8ba0b6 20%, #7d92aa 60%, #6c86a0); border-color: #35404c; }
.right .slate3 span { padding-left: 9px; }

/* windows */
.win { position: absolute; border: 1px solid #3e4a54; border-radius: 6px; overflow: hidden; background: #d2f6fc; box-shadow: 0 2px 7px 1px rgba(0,0,0,.55); display: flex; flex-direction: column; }
.win .cli { border: 1px solid #7b8a96; background: #fff; flex: 1; min-height: 0; display: flex; flex-direction: column; overflow: hidden; }
.notepad { left: 465px; top: 440px; width: 940px; height: 541px; padding: 0 7px 7px; background: linear-gradient(90deg, #fff 0 203px, #c9f1fc 210px, #d0f2fe 60%); border-color: #4a5a62; }
.notepad header { height: 28px; display: flex; align-items: center; gap: 5px; flex: none; } .notepad header svg { width: 16px; height: 16px; }
.mbar { height: 21px; flex: none; background: linear-gradient(#fff, #e6eaf6 40%, #d5daec 50%, #e2e6f3); border-bottom: 1px solid #b6bccc; display: flex; align-items: center; }
.notepad .mbar span { color: #6d6d6d; margin: 0 7px; }
.notepad pre { font: 16.600px/20px "DejaVu Sans Mono", monospace; letter-spacing: 0; padding-left: 3px; }
.mini-paint { left: 1215px; top: 454px; width: 260px; height: 368px; padding: 0 6px 6px; background: #dcfbfc; }
.mini-paint > .p-title { height: 29px; border: 0; } .mini-paint > .p-title .pal { margin-left: 1px; }
.mini-paint .cli { background: #dfe9f5; }
.mini-paint .inner { width: 600px; height: 400px; display: flex; flex-direction: column; }
.inner.sheet { background: #dfe9f5; }
.hscroll { height: 16px; display: flex; align-items: center; background: #eee; flex: none; gap: 5px; padding-left: 6px; } .hscroll div { height: 15px; flex: 1; border: 1px solid #999; background: linear-gradient(#f4f4f4, #ccc); margin-right: 20px; padding: 3px 0 0 74px; } .hscroll b { display: block; width: 8px; height: 7px; background: repeating-linear-gradient(90deg, #666 0 1px, transparent 1px 3px); }

/* Explorer */
.ex { width: 1092px; height: 619px; padding: 0 6px 7px; }
.ex .wbtn { margin-right: 0; flex: none; }
.ex1 { left: 1366px; top: 395px; background: linear-gradient(#cdf3fe, #d9f6fc 60%, #c7ecf8); } .ex2 { left: 1391px; top: 419px; background: linear-gradient(#d5ffff, #c3f3fa 20%, #cdf2fa); }
.ex3 { left: 1416px; top: 444px; background: linear-gradient(#a8cdec, #b4d9fa 30px, #a5bfd8 64px, #9dc2ea 50%, #a5cbf0); box-shadow: 0 3px 12px 3px rgba(0,0,0,.75); border-color: #1c2a38; }
.addr { height: 45px; display: flex; align-items: center; flex: none; padding: 8px 0 0 4px; }
.rnd { width: 24px; height: 24px; border-radius: 50%; background: linear-gradient(#7fb3e8, #1c58b0 50%, #0b3a8c 52%, #38b0ec); border: 1px solid #26466e; color: #fff; display: flex; align-items: center; justify-content: center; flex: none; } .rnd svg { width: 14px; height: 14px; }
.rnd.gr { background: linear-gradient(#eaf2fa, #b8cde0); margin-left: 4px; color: #dde9f5; border-color: #8296ae; }
.addr > .dn { margin: 0 4px; }
.path { width: 809px; height: 22px; background: #f4f9fe; border: 1px solid #7590b0; display: flex; align-items: center; padding-left: 3px; letter-spacing: -.2px; }
.path svg { width: 15px; height: 16px; } .path .ra { margin: 0 9px 0 10px; } .path svg + .ra { margin-left: 7px; }
.path .end { margin-left: auto; margin-right: 6px; } .path .rf { color: #2c6cc0; border-left: 1px solid #90a6c0; width: 24px; height: 20px; padding: 3px; }
.srch { margin-left: 6px; flex: 1; height: 22px; background: #f2f7fc; border: 1px solid #7590b0; font-style: italic; color: #6d7a88; display: flex; align-items: center; padding: 0 6px 0 8px; justify-content: space-between; } .srch svg { width: 13px; height: 13px; }
.ex .mbar span { margin: 0 0 0 10px; width: auto; } .ex .mbar span + span { margin-left: 16px; }
.tools2 { height: 31px; flex: none; background: linear-gradient(#f9fbfe, #ebf1fb 50%, #dde7f6 52%, #dce8f8); border-bottom: 1px solid #a9bad0; display: flex; align-items: center; color: #1e395b; }
.tools2 span { display: flex; align-items: center; gap: 6px; } .tools2 svg { width: 16px; height: 16px; } .tools2 span svg { margin-right: -2px; }
.t1 { margin-left: 18px; width: 91px; } .t2 { width: 97px; } .t3 { width: 99px; } .t4 { width: 86px; } .t5 { width: 55px; }
.tools2 div { margin-left: auto; display: flex; align-items: center; margin-right: 15px; } .tools2 div svg { margin-left: 24px; color: #4a90b0; width: 17px; } .tools2 div svg:first-child { margin: 0; } .tools2 div .dn { margin-left: 9px; }
.exbody { flex: 1; min-height: 0; display: flex; background: #fcfcfc; }
.tree { width: 242px; list-style: none; padding-top: 9px; overflow: hidden; flex: none; }
.tree li { height: 21px; display: flex; align-items: center; gap: 5px; padding-left: 30px; } .tree svg { width: 16px; height: 16px; } .tree .top { padding-left: 20px; }
.tree .cur { background: linear-gradient(#f8f8f8, #e2e2e2); border: 1px solid #d4d4d4; border-radius: 2px; margin: 0 1px; padding-left: 28px; }
.vscroll { width: 16px; background: #f0f0f0; display: flex; flex-direction: column; align-items: center; padding: 7px 0; flex: none; }
.vscroll div { width: 15px; height: 280px; border: 1px solid #999; background: linear-gradient(90deg, #f6f6f6, #dcdcdc 50%, #c4c4c4); border-radius: 2px; display: flex; align-items: center; justify-content: center; margin: 7px 0 auto; } .vscroll b { width: 7px; height: 8px; background: repeating-linear-gradient(#666 0 1px, transparent 1px 3px); }
.files { display: grid; grid-template-columns: repeat(7, 114px); align-content: start; padding: 6px 0 0 12px; grid-auto-rows: min-content; }
.files figure { display: flex; flex-direction: column; align-items: center; justify-content: flex-start; text-align: center; line-height: 15px; width: 104px; margin: 0 auto; padding-top: 53px; } .files svg { width: 92px; height: 24px; margin-bottom: 3px; box-shadow: 1px 1px 2px #aaa; } .files .tall { height: 74px; }
.files figure:has(.tall) { padding-top: 3px; height: 112px; } .files .pick { height: 98px !important; background: linear-gradient(#d9eafc, #c0dafc); border: 1px solid #7da2ce; border-radius: 3px; }
.files figure:last-child { padding-top: 5px; }
.fa { color: #000; } .fa svg { color: #0c1018; } .fb svg { color: #4a3228; } .fc svg { color: #d8d0cc; } .fd svg { color: #a8b0b8; } .fe svg { color: #f6f6f6; }
.details { height: 54px; flex: none; background: #f0f4fb; border-top: 1px solid #d4dff0; display: flex; color: #667d9a; } .details > svg { width: 50px; height: 41px; margin: 5px 18px 0 20px; box-shadow: 0 0 3px #888; }
.details p { line-height: 18px; padding-top: 6px; width: 52px; } .details p b { display: block; font-weight: 400; color: #1e395b; }
.details dl { display: grid; grid-template-columns: 64px 140px; grid-auto-rows: 18px; padding-top: 6px; column-gap: 5px; line-height: 18px; } .details dt { text-align: right; } .details dd { color: #1e395b; } .d2 { margin-left: -68px; } .details .d2 { grid-template-columns: 75px 140px; }

/* Firefox page in the canvas */
.mid .canvas { position: relative; justify-content: space-between; }
.mid .p-status span { width: 156px; } .mid .p-status span:nth-child(3) { border: 0; }
.pv { margin: -6px 0 0; } .pv div { height: 440px; margin-top: 8px; }
.fx { width: 1280px; height: 1024px; background: #f9f9f9; position: relative; font-family: "DejaVu Sans Condensed", "DejaVu Sans", sans-serif; font-stretch: condensed; font-size: 10.800px; letter-spacing: -.25px; }
.fxtabs { height: 30px; background: #0a246a; display: flex; color: #fff; padding-left: 14px; align-items: center; }
.fxtabs span { width: 163px; display: flex; align-items: center; height: 30px; padding: 2px 7px 0 10px; position: relative; flex: none; } .fxtabs span::after { content: ""; position: absolute; right: 0; top: 5px; height: 22px; width: 1px; background: #7382b0; } .fxtabs .last::after, .fxtabs .cur::after { display: none; }
.fxtabs svg { width: 16px; height: 16px; margin-right: 5px; } .fxtabs b { font-weight: 400; flex: 1; } .fxtabs .x { width: 9px; height: 9px; margin: 0 0 0 8px; }
.fxtabs .noic { padding-left: 9px; }
.fxtabs .cur { background: #e5e3de; color: #000; height: 28px; align-self: flex-end; border-radius: 9px 9px 0 0; margin-left: 8px; width: 162px; } .fxtabs .cur .x { color: #888; } .fxtabs strong { font-size: 18px; margin-left: 4px; }
.w2k { margin: 2px 3px auto auto; display: flex; } .w2k i { width: 16px; height: 14px; background: #d6d2ca; color: #000; border: 1px solid #fff; border-right-color: #444; border-bottom-color: #444; font: bold 11px/11px "DejaVu Sans", sans-serif; text-align: center; } .w2k i:last-child { margin-left: 2px; }
.fxbar { height: 41px; background: linear-gradient(#e5e3de, #d4d0c8); border-bottom: 1px solid #888; display: flex; align-items: center; color: #4d5562; position: relative; }
.bk { width: 32px; height: 32px; border-radius: 50%; border: 1px solid #999; background: #e9e7e3; margin-left: 5px; display: flex; align-items: center; justify-content: center; position: relative; z-index: 1; } .bk svg { width: 16px; height: 16px; color: #4d5562; }
.furl { width: 747px; height: 24px; border: 1px solid #8a8a88; background: #fff; margin-left: -6px; display: flex; align-items: center; padding-left: 11px; color: #777; letter-spacing: -.3px; } .furl b { color: #000; font-weight: 400; }
.furl .ky { width: 15px; height: 15px; color: #333b46; } .furl .cv { width: 8px; height: 22px; margin: 0 2px; } .furl .inf { width: 14px; height: 14px; color: #999; } .furl .lk { width: 11px; height: 13px; color: #4a9a10; margin-left: 5px; } .furl > i { width: 1px; height: 16px; background: #ccc; margin: 0 5px 0 8px; } .furl > i.r { margin: 0 9px 0 auto; } .furl .rl { width: 13px; height: 13px; color: #7a8694; margin-right: 10px; }
.fsr { width: 236px; height: 24px; border: 1px solid #8a8a88; background: #fff; margin-left: 7px; display: flex; align-items: center; padding: 0 4px 0 5px; gap: 4px; color: #000; } .fsr svg { width: 15px; height: 16px; } .fsr .go { margin-left: auto; color: #889; width: 11px; }
.fxbar > svg { width: 16px; height: 16px; margin-left: 20px; } .fxbar .s1 { margin-left: 13px; } .fxbar .sp { width: 1px; height: 17px; background: #bbb; margin-left: 7px; } .fxbar .s2 { margin-left: 8px; } .fxbar .sp.l { height: 38px; margin-left: 13px; } .fxbar .s3 { margin-left: 13px; }
.fxpage { display: flex; flex-direction: column; align-items: center; color: #24292e; font-family: "DejaVu Sans", sans-serif; font-stretch: normal; letter-spacing: -.05px; font-size: 11.500px; }
.fxpage .logo { width: 48px; height: 48px; margin-top: 32px; color: #333; }
.fxpage h1 { font-weight: 400; font-size: 20px; line-height: 36px; margin-top: 26px; letter-spacing: -.2px; }
.card { width: 308px; height: 154px; background: #fff; border: 1px solid #d8dee2; border-radius: 5px; margin-top: 15px; padding: 20px 20px 0; } .card label { display: block; font-weight: 700; line-height: 21px; height: 28px; font-size: 11px; letter-spacing: -.2px; }
.inp { height: 32px; border: 1px solid #0366d6; border-radius: 5px; box-shadow: 0 0 0 3px #b3d1f3; line-height: 31px; padding-left: 12px; }
.green { background: #2ea44f; border: 1px solid #278a43; color: #fff; border-radius: 5px; text-align: center; }
.card .green { margin-top: 20px; height: 32px; line-height: 30px; font-weight: 400; }
.para { width: 268px; margin-top: 21px; line-height: 21px; } .para p { margin-bottom: 10px; } .para svg { display: inline-block; width: 16px; height: 12px; vertical-align: -2px; }
.fx a { color: #0366d6; } .foot { display: flex; gap: 16px; margin-top: 79px; line-height: 18px; color: #586069; font-size: 10.300px; }
.pop { position: absolute; left: 35px; top: 67px; width: 338px; height: 156px; background: #fff; border: 1px solid #888; border-radius: 4px; display: flex; padding: 12px; gap: 15px; color: #000; } .pop::before { content: ""; position: absolute; left: 10px; top: -6px; width: 10px; height: 10px; background: #fff; border: 1px solid #888; border-right: 0; border-bottom: 0; transform: rotate(45deg); }
.pop .kk { width: 62px; height: 60px; } .pop .px { position: absolute; right: 8px; top: 8px; width: 9px; height: 9px; color: #889; } .pop b { line-height: 13px; display: block; } .pop p { line-height: 20px; letter-spacing: -.4px; }
.fld { display: block; width: 233px; height: 20px; border: 1px solid #444; border-right-color: #ccc; border-bottom-color: #ccc; line-height: 19px; padding-left: 5px; margin: 9px 0 5px -1px; } .dots { font-size: 8px; margin-top: 0; }
.rem { width: 90px; height: 24px; border: 1px solid #999; margin: 20px 0 0 147px; display: flex; align-items: center; } .rem span { flex: 1; text-align: center; border-right: 1px solid #999; line-height: 22px; } .rem u { text-decoration: underline; } .rem .dn { margin: 0 6px; border-top-color: #000; }

/* Chrome */
.behind { position: absolute; background: #fff; right: 0; border-top: 1px solid #4a5a66; }
.b1 { top: 218px; width: 110px; height: 985px; background: linear-gradient(#6ca7c8, #a3c8dc 33px, #fff 33px); } .b2 { top: 292px; width: 110px; height: 910px; background: linear-gradient(#fff, #f1f4f5 40px, #fff 56px); }
.behind .wbtn { position: absolute; right: 4px; margin: 0; } .b2 .wbtn { right: 0; }
.brow { position: absolute; right: 15px; top: 37px; display: flex; align-items: center; gap: 12px; } .b2 .brow { top: 51px; } .ob { position: absolute; right: 14px; top: 88px; color: #444; letter-spacing: -.4px; }
.pill { height: 28px; border: 1px solid #1a66cc; background: #e8f0fe; color: #1a66cc; border-radius: 14px; width: 80px; display: flex; align-items: center; justify-content: flex-end; padding-right: 9px; font-size: 12px; } .pill i { width: 21px; height: 21px; border-radius: 50%; background: radial-gradient(#d8a090 30%, #5a2a30 50%, #33181c); margin-right: 8px; }
.up { width: 16px; height: 16px; border-radius: 50%; background: #f29900; color: #fff; font-size: 11px; line-height: 15px; text-align: center; flex: none; }
.chr { left: 1px; top: 218px; width: 1180px; height: 985px; padding: 0 7px 8px; background: linear-gradient(#d6fbfd 0, #eefcfe 30px, #effcfd 60px, #dff8fc); border-color: #2c3a44; }
.chr > .wbtn { position: absolute; right: 6px; top: 0; margin: 0; }
.ctabs { height: 46px; flex: none; display: flex; align-items: flex-end; padding-left: 8px; background: radial-gradient(circle at 560px 18px, #7fb4ee 0, transparent 9px), radial-gradient(circle at 695px 18px, #7fc4ee 0, transparent 9px), radial-gradient(circle at 830px 18px, #86c0ee 0, transparent 9px), radial-gradient(circle at 965px 18px, #e08aa0 0, transparent 9px), linear-gradient(90deg, #e9fbfd, #fff 25%, #d2fafd 45%, #edfeff 70%, #d0f3f8); }
.ctabs span { width: 238px; height: 34px; border-radius: 8px 8px 0 0; background: #e4e8ec; display: flex; align-items: center; padding: 0 11px; gap: 8px; color: #555; } .ctabs .on { background: #fff; } .ctabs svg { width: 16px; height: 16px; } .ctabs b { font-weight: 400; flex: 1; letter-spacing: -.4px; } .ctabs .x { width: 10px; height: 10px; } .ctabs strong { width: 26px; height: 26px; border-radius: 50%; background: #dde8ec; font: 22px/25px "Open Sans", sans-serif; text-align: center; margin: 0 0 4px 10px; color: #444; }
.chr .cli { border: 0; }
.cbar { height: 37px; flex: none; display: flex; align-items: center; padding-left: 14px; color: #5a5f64; } .cbar > svg { width: 15px; height: 15px; margin-right: 17px; } .cbar .lt { color: #bbb; }
.curl { width: 722px; height: 28px; border-radius: 14px; background: #f1f3f4; margin-left: -3px; display: flex; align-items: center; padding: 0 11px 0 13px; font-size: 13px; letter-spacing: -.25px; } .curl b { font-weight: 400; color: #000; } .curl .lk { width: 10px; height: 13px; margin-right: 10px; } .curl .st { width: 16px; height: 16px; margin-left: auto; }
.e { width: 17px; height: 17px; margin-left: 14px; color: #fff; text-align: center; font-weight: 700; line-height: 16px; } .e1 { background: #3fa33f; } .e2 { background: linear-gradient(#1a9fe8 50%, #8c3a10 50%); font-size: 9px; line-height: 25px; width: 20px; height: 21px; } .e3 { color: #2266aa; font-size: 16px; } .cbar .e4 { margin: 0 0 0 15px; width: 17px; } .e5 { width: 0; height: 0; border: 8px solid transparent; border-top: 0; border-bottom: 15px solid #70777c; } .cbar .sp { width: 1px; height: 17px; background: #ccc; margin: 0 10px 0 13px; } .cbar .up { margin-left: 11px; }
.cbk { height: 32px; flex: none; display: flex; align-items: center; padding-left: 13px; color: #444; border-bottom: 1px solid #ccc; letter-spacing: -.45px; } .cbk svg { width: 16px; height: 16px; } .cbk span { padding-left: 8px; } .k1 { width: 60px; } .m1 { margin-left: 15px; } .k2 { width: 137px; }
.d { width: 16px; height: 16px; border-radius: 50%; background: #1877f2; color: #fff; font-size: 11px; font-weight: 700; line-height: 16px; text-align: center; margin-right: 17px; } .yel { background: linear-gradient(90deg, #fff2a0, #e8a800); } .li { border-radius: 2px; background: #0a66a2; } .rd { background: #ff4500; } .m2 { margin-right: 16px; } .k3 { width: 72px; } .k4 { width: 63px; } .k5 { width: 38px; } .k6 { width: 168px; } .k7 { width: 25px; } .cbk .sp { width: 1px; height: 16px; background: #ccc; margin: 0 9px 0 0; }
.page { flex: 1; min-height: 0; display: flex; overflow: hidden; }
.gh { width: 1148px; height: 811px; overflow: hidden; color: #24292e; font-size: 14px; letter-spacing: -.35px; }
.ghh { height: 53px; background: #24292e; display: flex; align-items: center; color: #fff; padding-left: 16px; font-size: 13.500px; } .ghh .logo { width: 32px; height: 32px; } .gs { width: 299px; height: 28px; background: #404448; border-radius: 5px; margin-left: 16px; color: #b0b3b6; font-size: 13px; display: flex; align-items: center; justify-content: space-between; padding: 0 7px 0 11px; } .gs i { width: 19px; height: 20px; border: 1px solid #6a6e72; border-radius: 3px; text-align: center; line-height: 18px; } .ghh b { font-weight: 600; } .n1 { margin-left: 17px; width: 97px; } .n2 { width: 54px; } .n3 { width: 95px; } .n4 { width: 398px; } .bell { width: 16px; height: 18px; } .ghh span { font-size: 20px; width: 63px; padding-left: 18px; display: flex; align-items: center; gap: 5px; } .ghh .dn { border-top-color: #fff; } .ghh u { width: 20px; height: 20px; border-radius: 50%; background: conic-gradient(from 45deg, #eee 25%, #c86a90 0 50%, #eee 0 75%, #f3dde6 0); margin-right: 5px; }
.hero { height: 299px; border-bottom: 1px solid #e1e4e8; background: linear-gradient(rgba(255,255,255,0) 60%, #fff), linear-gradient(90deg, #daebff, #dcecff 50%, #e3f7f2 75%, #e8fff0); display: flex; flex-direction: column; align-items: center; position: relative; padding-top: 71px; text-align: center; } .hx { position: absolute; right: 24px; top: 20px; width: 28px; height: 28px; border: 1px solid #c8dcd4; border-radius: 50%; display: flex; align-items: center; justify-content: center; } .hx svg { width: 10px; height: 10px; color: #586069; }
.hero h2 { font-weight: 400; font-size: 29px; line-height: 46px; letter-spacing: -.5px; } .hero p { font-size: 18px; line-height: 28px; margin-top: 8px; color: #586069; letter-spacing: -.4px; } .hero .green { margin-top: 29px; width: 211px; height: 42px; font-size: 16px; line-height: 40px; font-weight: 600; letter-spacing: -.4px; }
.rh { height: 112px; background: #fafbfc; border-bottom: 1px solid #e1e4e8; padding: 0 32px; display: flex; flex-direction: column; } .gh a { color: #0366d6; }
.rt { height: 64px; display: flex; align-items: center; font-size: 19px; gap: 6px; letter-spacing: -.5px; } .rt > svg { width: 16px; height: 16px; color: #959da5; } .rt > a:first-of-type { margin-left: 3px; }
.rb { margin-left: auto; display: flex; gap: 11px; font-size: 12px; letter-spacing: -.3px; } .rb span { display: flex; height: 28px; border: 1px solid #d5d9dd; border-radius: 5px; line-height: 26px; overflow: hidden; } .rb b { font-weight: 500; display: flex; align-items: center; justify-content: center; gap: 4px; flex: 1; } .rb svg { width: 15px; height: 15px; color: #6a737d; } .rb i { width: 32px; text-align: center; background: #fff; border-left: 1px solid #d5d9dd; } .r1 { width: 124px; } .r2 { width: 97px; } .r3 { width: 100px; } .r3 b { color: #959da5; }
.rn { flex: 1; display: flex; align-items: stretch; } .rn span { display: flex; align-items: center; gap: 7px; font-size: 13px; } .rn svg { width: 16px; height: 16px; color: #959da5; } .rn .on { width: 87px; padding-left: 15px; border-bottom: 2px solid #f9826c; } .rn .on svg { color: #24292e; } .q2 { width: 92px; margin-left: 16px; } .q3 { width: 135px; } .q4 { width: 101px; } .q5 { width: 105px; } .q6 { width: 82px; } .q7 { width: 105px; } .q8 { width: 103px; }
.cols { display: flex; padding: 32px 32px 0; gap: 32px; } .mainc { width: 805px; } .cols aside { width: 247px; }
.acts { display: flex; gap: 8px; margin-bottom: 16px; font-size: 13.500px; } .btn { height: 32px; border: 1px solid #d3d8dc; background: #fafbfc; border-radius: 5px; display: flex; align-items: center; justify-content: center; gap: 4px; font-weight: 500; } .br { width: 229px; margin-right: auto; color: #586069; } .br b { color: #24292e; font-weight: 600; } .btn svg { width: 15px; height: 15px; } .gf { width: 93px; } .af { width: 97px; } .cl { width: 110px; background: #2ea44f; border-color: #278a43; color: #fff; font-weight: 600; } .cl .dn { border-top-color: #fff; } .btn .dn { margin-left: 3px; }
.note { height: 55px; border: 1px solid #e1e4e8; background: #f6f8fa; border-radius: 5px; display: flex; align-items: center; padding: 0 16px; font-size: 13px; } .note span { display: flex; align-items: center; gap: 3px; color: #586069; margin-left: 17px; } .note span:first-of-type { margin-left: auto; } .note svg { width: 15px; height: 15px; }
.tbl { margin-top: 16px; border: 1px solid #e1e4e8; border-radius: 5px 5px 0 0; } .th { height: 54px; background: #f1f8ff; border-bottom: 1px solid #c8e1ff; display: flex; align-items: center; padding: 0 16px 0 12px; font-size: 13px; } .th u { width: 24px; height: 24px; border-radius: 50%; background: #e1e8f0; } .th s { width: 199px; height: 13px; background: #e1e6ed; margin: 0 auto 0 12px; border-radius: 2px; } .th span { display: flex; gap: 4px; align-items: center; margin-left: 16px; } .th svg { width: 16px; height: 16px; color: #586069; }
.tr2 { height: 37px; border-bottom: 1px solid #e1e4e8; display: flex; align-items: center; padding: 0 16px; } .tr2 svg { width: 16px; height: 14px; margin-right: 16px; } .tr2 b { font-weight: 400; width: 223px; font-size: 13.500px; letter-spacing: -.5px; } .tr2 s { width: 233px; height: 13px; background: #f0f0f0; border-radius: 2px; } .tr2 .sm { width: 100px; margin-left: auto; }
.cols h3 { font-size: 15.500px; font-weight: 600; line-height: 24px; display: flex; justify-content: space-between; align-items: center; } .cols h3 svg { width: 16px; height: 16px; } .desc { font-style: italic; color: #586069; line-height: 24px; margin-top: 16px; font-size: 15.500px; letter-spacing: -.45px; } .rdm { display: flex; gap: 12px; margin-top: 17px; align-items: center; line-height: 20px; color: #586069; } .rdm svg { width: 16px; height: 16px; } .cols hr { border: 0; border-top: 1px solid #e1e4e8; margin: 24px 0 25px; } .rel { font-size: 12px; line-height: 18px; margin-top: 16px; }
.cscroll { width: 17px; background: #f1f1f1; display: flex; flex-direction: column; align-items: center; padding: 7px 0; } .cscroll div { width: 14px; height: 30px; background: #c1c1c1; margin: 6px 0 auto; }
.dlbar { height: 49px; flex: none; border-top: 1px solid #ccc; display: flex; align-items: center; padding-left: 20px; color: #555; } .dlbar svg { width: 16px; height: 16px; } .dlbar span { margin-left: 12px; width: 151px; } .dlbar em { width: 27px; font-size: 16px; } .dlbar i { width: 1px; height: 36px; background: #ccc; } .dlbar div { margin-left: auto; width: 77px; height: 32px; border: 1px solid #ccc; border-radius: 4px; text-align: center; line-height: 30px; } .dlbar .x { width: 11px; height: 11px; margin: 0 13px; }
```
